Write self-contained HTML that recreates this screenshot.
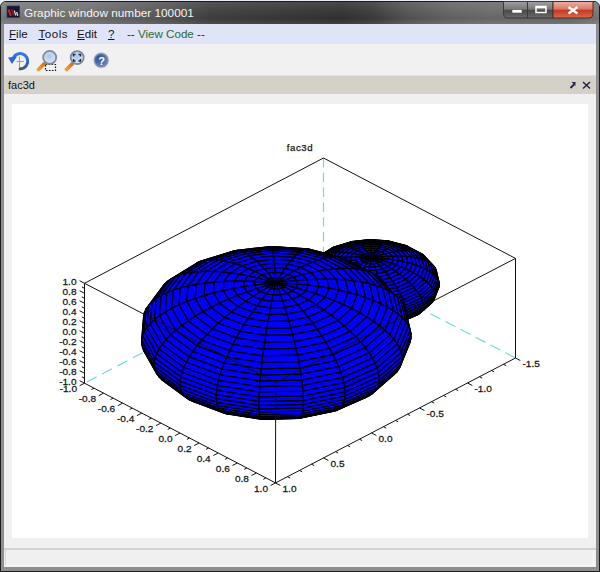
<!DOCTYPE html>
<html><head><meta charset="utf-8">
<style>
*{margin:0;padding:0;box-sizing:border-box}
html,body{width:600px;height:572px;overflow:hidden;background:#e9ecf6;font-family:"Liberation Sans",sans-serif}
.abs{position:absolute}
#frame{position:absolute;left:0;top:1px;width:600px;height:571px;background:#8e8e8e;border:1px solid #1a1a1a;border-radius:6px 6px 0 0}
#title{position:absolute;left:1px;top:2px;width:598px;height:22px;border-radius:5px 5px 0 0;
 background:linear-gradient(to right,#7c7c7c 0%,#707070 15%,#555 28%,#404040 35%,#373737 50%,#333 57%,#3c3c3c 62%,#555 68%,#656565 75%,#6c6c6c 82%,#6a6a6a 95%,#7a7a7a 100%)}
#titlesh{position:absolute;left:1px;top:2px;width:598px;height:22px;border-radius:5px 5px 0 0;
 background:linear-gradient(to bottom,rgba(255,255,255,0.10) 0%,rgba(255,255,255,0.03) 40%,rgba(0,0,0,0.06) 75%,rgba(255,255,255,0.06) 100%)}
#ttext{position:absolute;left:24px;top:5.5px;font-size:11.8px;color:#f4f4f4;white-space:nowrap}
#menubar{position:absolute;left:4px;top:24px;width:592px;height:21px;background:#dfe4f6;border-bottom:1px solid #aeb2bc;box-shadow:0 1px 0 #d6d8dc}
.mi{position:absolute;top:3px;font-size:11.6px;color:#151515;white-space:nowrap}
#toolbar{position:absolute;left:4px;top:44px;width:592px;height:31px;background:#f1f1f1}
#hdr{position:absolute;left:4px;top:75px;width:592px;height:19px;background:#d5d1c9;border-top:1px solid #e2ded8}
#content{position:absolute;left:4px;top:94px;width:592px;height:455px;background:#f0f0f0}
#canvas{position:absolute;left:12px;top:104px;width:576px;height:434px;background:#fff}
#status{position:absolute;left:4px;top:548px;width:592px;height:19px;background:#f0f0f0;border-top:2px solid #d2d2d2}
#statin{position:absolute;left:5px;top:550px;width:589px;height:16px;border-left:1px solid #d8d8d8;border-right:1px solid #fafafa;border-bottom:1px solid #fafafa}
</style></head><body>
<div id="frame"></div>
<div id="title"></div>
<div id="titlesh"></div>
<div id="ttext">Graphic window number 100001</div>
<div id="menubar">
 <span class="mi" style="left:5px"><u>F</u>ile</span>
 <span class="mi" style="left:34.5px;letter-spacing:0.5px"><u>T</u>ools</span>
 <span class="mi" style="left:73px"><u>E</u>dit</span>
 <span class="mi" style="left:104px"><u>?</u></span>
 <span class="mi" style="left:123px;color:#2a2a2a">-- <span style="color:#2c6a3c">View Code</span> --</span>
</div>
<div id="toolbar"></div>
<div id="hdr"><span class="abs" style="left:4px;top:2.5px;font-size:11px;color:#111">fac3d</span></div>
<div id="content"></div>
<div id="canvas"></div>
<div id="status"></div>
<div id="statin"></div>
<svg class="abs" style="left:0;top:0" width="600" height="572" viewBox="0 0 600 572">
<defs>
 <linearGradient id="gbtn" x1="0" y1="0" x2="0" y2="1">
  <stop offset="0" stop-color="#a0a0a0"/><stop offset="0.45" stop-color="#7a7a7a"/><stop offset="0.55" stop-color="#4a4a4a"/><stop offset="1" stop-color="#6a6a6a"/>
 </linearGradient>
 <linearGradient id="gred" x1="0" y1="0" x2="0" y2="1">
  <stop offset="0" stop-color="#eeb0a0"/><stop offset="0.45" stop-color="#dc7a68"/><stop offset="0.55" stop-color="#c43a22"/><stop offset="1" stop-color="#d86a50"/>
 </linearGradient>
 <linearGradient id="gblue" x1="0" y1="0" x2="0" y2="1">
  <stop offset="0" stop-color="#3a78e0"/><stop offset="0.6" stop-color="#2a62c8"/><stop offset="1" stop-color="#3a6070"/>
 </linearGradient>
 <radialGradient id="glens" cx="0.45" cy="0.4" r="0.6">
  <stop offset="0" stop-color="#a8c8ee"/><stop offset="1" stop-color="#dce8f6"/>
 </radialGradient>
 <linearGradient id="ghandle" x1="0" y1="1" x2="1" y2="0">
  <stop offset="0" stop-color="#f0a030"/><stop offset="1" stop-color="#e07010"/>
 </linearGradient>
 <radialGradient id="ghelp" cx="0.35" cy="0.35" r="0.7">
  <stop offset="0" stop-color="#2a4f90"/><stop offset="1" stop-color="#6a8cc0"/>
 </radialGradient>
</defs>
<!-- window icon -->
<rect x="7" y="6" width="12.5" height="11.5" fill="#15152e" stroke="#2e3a66" stroke-width="0.8"/>
<path d="M8.6 9.5 L10.8 15.8" stroke="#d02020" stroke-width="2.2"/>
<path d="M11.6 9 L13.6 15.5" stroke="#802018" stroke-width="1.6"/>
<path d="M14.2 10.5 L15.8 15.5" stroke="#e8c8c8" stroke-width="1.3"/>
<path d="M16.6 12 L17.8 15.8" stroke="#f0e0e0" stroke-width="1.3"/>
<!-- title buttons -->
<path d="M503.5 1.5 H527.5 V18 H507.5 Q503.5 18 503.5 14 Z" fill="url(#gbtn)" stroke="#3a3a3a" stroke-width="1"/>
<rect x="527.5" y="1.5" width="25.5" height="16.5" fill="url(#gbtn)" stroke="#3a3a3a" stroke-width="1"/>
<path d="M553 1.5 H593 V14 Q593 18 589 18 H553 Z" fill="url(#gred)" stroke="#5a2a22" stroke-width="1"/>
<rect x="512" y="9.5" width="10" height="3.5" fill="#fff" stroke="#505050" stroke-width="0.6"/>
<rect x="536" y="6.5" width="10" height="6" fill="none" stroke="#fff" stroke-width="1.5"/>
<rect x="536" y="6.5" width="10" height="1.8" fill="#fff"/>
<path d="M568.5 7 L577.5 13.5 M577.5 7 L568.5 13.5" stroke="#fff" stroke-width="2.4"/>
<!-- toolbar icons -->
<path d="M18.8 68.7 A7.6 7.6 0 1 0 13.5 57.5" fill="none" stroke="url(#gblue)" stroke-width="3"/>
<path d="M8 57.5 L17 56.5 L12 64 Z" fill="#2a66d8"/>
<path d="M19.5 56.5 V67 M16.5 61.5 H24" stroke="#8aa6a8" stroke-width="1"/>
<rect x="45.5" y="64.5" width="10" height="6" fill="none" stroke="#111" stroke-width="1.2" stroke-dasharray="1.6 1.4"/>
<path d="M38.5 69.5 L44 64" stroke="url(#ghandle)" stroke-width="3.8" stroke-linecap="round"/>
<circle cx="49.7" cy="57.4" r="6.5" fill="url(#glens)" stroke="#7d8a98" stroke-width="1.8"/>
<path d="M66.5 69.5 L72 64" stroke="url(#ghandle)" stroke-width="3.8" stroke-linecap="round"/>
<circle cx="77.2" cy="57.6" r="6.5" fill="url(#glens)" stroke="#7d8a98" stroke-width="1.8"/>
<path d="M73.5 56.5 V54.5 H75.5 M78.5 54.5 H80.5 V56.5 M80.5 59 V61 H78.5 M75.5 61 H73.5 V59" fill="none" stroke="#1a2a4a" stroke-width="1.4"/>
<circle cx="101.2" cy="60.3" r="7" fill="url(#ghelp)" stroke="#8a98aa" stroke-width="1.4"/>
<circle cx="101.2" cy="60.3" r="7.9" fill="none" stroke="#d8e0ea" stroke-width="0.6"/>
<text x="101.5" y="64.5" font-family="Liberation Sans, sans-serif" font-weight="bold" font-size="11" fill="#fff" text-anchor="middle">?</text>
<!-- header icons -->
<path d="M570.5 88 L574 84.5" stroke="#2a2044" stroke-width="1.8"/>
<path d="M571.5 82 H575.5 V86 Z" fill="#2a2044"/>
<path d="M583 82 L590 88.5 M590 82 L583 88.5" stroke="#2a2044" stroke-width="1.5"/>
<g stroke="#66dedb" stroke-width="1.15" fill="none"><line x1="323.50" y1="158.00" x2="323.50" y2="258.00" stroke-dasharray="9.5 5.3"/><line x1="84.50" y1="383.20" x2="323.50" y2="258.00" stroke-dasharray="11.05 6.32" stroke-dashoffset="-2.6"/><line x1="515.50" y1="358.00" x2="323.50" y2="258.00" stroke-dasharray="11.28 5.64"/></g><g fill="#0000ff" stroke="#000" stroke-width="1.2" stroke-linejoin="round"><polygon points="390.3,257.4 390.7,254.8 369.0,253.4 369.1,256.0"/><polygon points="389.8,260.1 390.3,257.4 369.1,256.0 369.2,258.8"/><polygon points="390.7,254.8 390.9,252.3 369.0,250.9 369.0,253.4"/><polygon points="389.2,263.1 389.8,260.1 369.2,258.8 369.2,261.8"/><polygon points="369.1,256.0 369.0,253.4 347.7,255.7 348.1,258.3"/><polygon points="369.2,258.8 369.1,256.0 348.1,258.3 348.8,261.0"/><polygon points="390.9,252.3 391.1,250.1 369.0,248.7 369.0,250.9"/><polygon points="369.0,253.4 369.0,250.9 347.3,253.3 347.7,255.7"/><polygon points="369.2,261.8 369.2,258.8 348.8,261.0 349.5,263.9"/><polygon points="388.5,266.1 389.2,263.1 369.2,261.8 369.3,264.9"/><polygon points="369.0,250.9 369.0,248.7 347.2,251.1 347.3,253.3"/><polygon points="391.1,250.1 391.1,248.1 369.0,246.7 369.0,248.7"/><polygon points="369.3,264.9 369.2,261.8 349.5,263.9 350.5,267.0"/><polygon points="387.6,269.3 388.5,266.1 369.3,264.9 369.5,268.1"/><polygon points="369.0,248.7 369.0,246.7 347.2,249.1 347.2,251.1"/><polygon points="369.5,268.1 369.3,264.9 350.5,267.0 351.5,270.1"/><polygon points="391.1,248.1 390.9,246.3 369.0,244.9 369.0,246.7"/><polygon points="386.7,272.5 387.6,269.3 369.5,268.1 369.6,271.4"/><polygon points="369.0,246.7 369.0,244.9 347.3,247.3 347.2,249.1"/><polygon points="369.6,271.4 369.5,268.1 351.5,270.1 352.7,273.3"/><polygon points="408.5,264.9 409.5,262.3 390.3,257.4 389.8,260.1"/><polygon points="390.9,246.3 390.7,244.8 369.0,243.4 369.0,244.9"/><polygon points="409.5,262.3 410.3,259.8 390.7,254.8 390.3,257.4"/><polygon points="407.3,267.7 408.5,264.9 389.8,260.1 389.2,263.1"/><polygon points="410.3,259.8 410.8,257.4 390.9,252.3 390.7,254.8"/><polygon points="369.0,244.9 369.0,243.4 347.7,245.7 347.3,247.3"/><polygon points="385.7,275.8 386.7,272.5 369.6,271.4 369.7,274.8"/><polygon points="405.8,270.5 407.3,267.7 389.2,263.1 388.5,266.1"/><polygon points="410.8,257.4 411.0,255.2 391.1,250.1 390.9,252.3"/><polygon points="369.7,274.8 369.6,271.4 352.7,273.3 354.0,276.5"/><polygon points="404.1,273.5 405.8,270.5 388.5,266.1 387.6,269.3"/><polygon points="348.8,261.0 348.1,258.3 329.7,264.0 330.9,266.6"/><polygon points="390.7,244.8 390.3,243.5 369.1,242.1 369.0,243.4"/><polygon points="411.0,255.2 411.0,253.2 391.1,248.1 391.1,250.1"/><polygon points="348.1,258.3 347.7,255.7 328.9,261.6 329.7,264.0"/><polygon points="349.5,263.9 348.8,261.0 330.9,266.6 332.2,269.3"/><polygon points="347.7,255.7 347.3,253.3 328.3,259.2 328.9,261.6"/><polygon points="369.0,243.4 369.1,242.1 348.1,244.4 347.7,245.7"/><polygon points="350.5,267.0 349.5,263.9 332.2,269.3 333.9,272.1"/><polygon points="384.5,279.2 385.7,275.8 369.7,274.8 369.9,278.3"/><polygon points="402.2,276.5 404.1,273.5 387.6,269.3 386.7,272.5"/><polygon points="347.3,253.3 347.2,251.1 328.1,257.0 328.3,259.2"/><polygon points="411.0,253.2 410.8,251.4 390.9,246.3 391.1,248.1"/><polygon points="369.9,278.3 369.7,274.8 354.0,276.5 355.4,279.9"/><polygon points="351.5,270.1 350.5,267.0 333.9,272.1 335.8,275.0"/><polygon points="347.2,251.1 347.2,249.1 328.1,255.0 328.1,257.0"/><polygon points="390.3,243.5 389.8,242.4 369.2,241.1 369.1,242.1"/><polygon points="400.1,279.5 402.2,276.5 386.7,272.5 385.7,275.8"/><polygon points="352.7,273.3 351.5,270.1 335.8,275.0 337.9,277.9"/><polygon points="410.8,251.4 410.3,249.8 390.7,244.8 390.9,246.3"/><polygon points="369.1,242.1 369.2,241.1 348.8,243.3 348.1,244.4"/><polygon points="383.3,282.6 384.5,279.2 369.9,278.3 370.1,281.7"/><polygon points="347.2,249.1 347.3,247.3 328.3,253.2 328.1,255.0"/><polygon points="370.1,281.7 369.9,278.3 355.4,279.9 357.0,283.2"/><polygon points="354.0,276.5 352.7,273.3 337.9,277.9 340.2,280.9"/><polygon points="397.8,282.6 400.1,279.5 385.7,275.8 384.5,279.2"/><polygon points="410.3,249.8 409.5,248.4 390.3,243.5 390.7,244.8"/><polygon points="389.8,242.4 389.2,241.6 369.2,240.3 369.2,241.1"/><polygon points="347.3,247.3 347.7,245.7 328.9,251.6 328.3,253.2"/><polygon points="369.2,241.1 369.2,240.3 349.5,242.5 348.8,243.3"/><polygon points="355.4,279.9 354.0,276.5 340.2,280.9 342.7,283.8"/><polygon points="382.1,286.0 383.3,282.6 370.1,281.7 370.2,285.2"/><polygon points="370.2,285.2 370.1,281.7 357.0,283.2 358.6,286.5"/><polygon points="395.4,285.7 397.8,282.6 384.5,279.2 383.3,282.6"/><polygon points="347.7,245.7 348.1,244.4 329.7,250.1 328.9,251.6"/><polygon points="409.5,248.4 408.5,247.2 389.8,242.4 390.3,243.5"/><polygon points="423.2,272.6 424.6,270.2 409.5,262.3 408.5,264.9"/><polygon points="421.5,275.1 423.2,272.6 408.5,264.9 407.3,267.7"/><polygon points="389.2,241.6 388.5,241.1 369.3,239.9 369.2,240.3"/><polygon points="357.0,283.2 355.4,279.9 342.7,283.8 345.5,286.8"/><polygon points="424.6,270.2 425.7,267.8 410.3,259.8 409.5,262.3"/><polygon points="419.4,277.7 421.5,275.1 407.3,267.7 405.8,270.5"/><polygon points="369.2,240.3 369.3,239.9 350.5,242.0 349.5,242.5"/><polygon points="425.7,267.8 426.4,265.6 410.8,257.4 410.3,259.8"/><polygon points="417.1,280.3 419.4,277.7 405.8,270.5 404.1,273.5"/><polygon points="392.7,288.7 395.4,285.7 383.3,282.6 382.1,286.0"/><polygon points="348.1,244.4 348.8,243.3 330.9,248.9 329.7,250.1"/><polygon points="380.7,289.4 382.1,286.0 370.2,285.2 370.4,288.7"/><polygon points="426.4,265.6 426.8,263.4 411.0,255.2 410.8,257.4"/><polygon points="414.4,282.9 417.1,280.3 404.1,273.5 402.2,276.5"/><polygon points="370.4,288.7 370.2,285.2 358.6,286.5 360.3,289.8"/><polygon points="408.5,247.2 407.3,246.2 389.2,241.6 389.8,242.4"/><polygon points="358.6,286.5 357.0,283.2 345.5,286.8 348.4,289.7"/><polygon points="426.8,263.4 426.8,261.4 411.0,253.2 411.0,255.2"/><polygon points="411.4,285.5 414.4,282.9 402.2,276.5 400.1,279.5"/><polygon points="332.2,269.3 330.9,266.6 317.4,275.0 319.2,277.4"/><polygon points="330.9,266.6 329.7,264.0 315.9,272.6 317.4,275.0"/><polygon points="333.9,272.1 332.2,269.3 319.2,277.4 321.4,279.8"/><polygon points="388.5,241.1 387.6,240.9 369.5,239.7 369.3,239.9"/><polygon points="329.7,264.0 328.9,261.6 314.8,270.3 315.9,272.6"/><polygon points="335.8,275.0 333.9,272.1 321.4,279.8 323.9,282.3"/><polygon points="348.8,243.3 349.5,242.5 332.2,247.9 330.9,248.9"/><polygon points="369.3,239.9 369.5,239.7 351.5,241.7 350.5,242.0"/><polygon points="426.8,261.4 426.4,259.5 410.8,251.4 411.0,253.2"/><polygon points="408.2,288.1 411.4,285.5 400.1,279.5 397.8,282.6"/><polygon points="390.0,291.7 392.7,288.7 382.1,286.0 380.7,289.4"/><polygon points="328.9,261.6 328.3,259.2 314.0,268.1 314.8,270.3"/><polygon points="337.9,277.9 335.8,275.0 323.9,282.3 326.7,284.8"/><polygon points="407.3,246.2 405.8,245.5 388.5,241.1 389.2,241.6"/><polygon points="379.3,292.7 380.7,289.4 370.4,288.7 370.6,292.1"/><polygon points="328.3,259.2 328.1,257.0 313.7,265.9 314.0,268.1"/><polygon points="370.6,292.1 370.4,288.7 360.3,289.8 362.1,293.1"/><polygon points="360.3,289.8 358.6,286.5 348.4,289.7 351.4,292.6"/><polygon points="340.2,280.9 337.9,277.9 326.7,284.8 329.8,287.3"/><polygon points="426.4,259.5 425.7,257.8 410.3,249.8 410.8,251.4"/><polygon points="404.8,290.6 408.2,288.1 397.8,282.6 395.4,285.7"/><polygon points="328.1,257.0 328.1,255.0 313.7,263.9 313.7,265.9"/><polygon points="342.7,283.8 340.2,280.9 329.8,287.3 333.2,289.7"/><polygon points="349.5,242.5 350.5,242.0 333.9,247.1 332.2,247.9"/><polygon points="387.6,240.9 386.7,240.9 369.6,239.8 369.5,239.7"/><polygon points="387.1,294.7 390.0,291.7 380.7,289.4 379.3,292.7"/><polygon points="328.1,255.0 328.3,253.2 314.0,262.0 313.7,263.9"/><polygon points="425.7,257.8 424.6,256.3 409.5,248.4 410.3,249.8"/><polygon points="401.2,293.1 404.8,290.6 395.4,285.7 392.7,288.7"/><polygon points="369.5,239.7 369.6,239.8 352.7,241.7 351.5,241.7"/><polygon points="313.1,281.8 313.9,276.6 270.6,273.8 270.7,279.1"/><polygon points="312.1,287.4 313.1,281.8 270.7,279.1 270.8,284.7"/><polygon points="345.5,286.8 342.7,283.8 333.2,289.7 336.8,292.1"/><polygon points="405.8,245.5 404.1,245.1 387.6,240.9 388.5,241.1"/><polygon points="362.1,293.1 360.3,289.8 351.4,292.6 354.6,295.4"/><polygon points="313.9,276.6 314.4,271.8 270.5,268.9 270.6,273.8"/><polygon points="377.8,296.0 379.3,292.7 370.6,292.1 370.8,295.5"/><polygon points="310.9,293.2 312.1,287.4 270.8,284.7 271.0,290.6"/><polygon points="370.8,295.5 370.6,292.1 362.1,293.1 363.9,296.3"/><polygon points="328.3,253.2 328.9,251.6 314.8,260.3 314.0,262.0"/><polygon points="270.7,279.1 270.6,273.8 227.8,278.5 228.8,283.7"/><polygon points="270.8,284.7 270.7,279.1 228.8,283.7 230.0,289.2"/><polygon points="348.4,289.7 345.5,286.8 336.8,292.1 340.6,294.5"/><polygon points="314.4,271.8 314.6,267.3 270.5,264.5 270.5,268.9"/><polygon points="424.6,256.3 423.2,254.9 408.5,247.2 409.5,248.4"/><polygon points="397.3,295.6 401.2,293.1 392.7,288.7 390.0,291.7"/><polygon points="270.6,273.8 270.5,268.9 227.2,273.7 227.8,278.5"/><polygon points="350.5,242.0 351.5,241.7 335.8,246.6 333.9,247.1"/><polygon points="271.0,290.6 270.8,284.7 230.0,289.2 231.6,295.0"/><polygon points="309.5,299.3 310.9,293.2 271.0,290.6 271.2,296.9"/><polygon points="384.2,297.6 387.1,294.7 379.3,292.7 377.8,296.0"/><polygon points="386.7,240.9 385.7,241.2 369.7,240.2 369.6,239.8"/><polygon points="328.9,251.6 329.7,250.1 315.9,258.7 314.8,260.3"/><polygon points="270.5,268.9 270.5,264.5 226.9,269.3 227.2,273.7"/><polygon points="404.1,245.1 402.2,244.9 386.7,240.9 387.6,240.9"/><polygon points="351.4,292.6 348.4,289.7 340.6,294.5 344.7,296.7"/><polygon points="363.9,296.3 362.1,293.1 354.6,295.4 357.9,298.2"/><polygon points="369.6,239.8 369.7,240.2 354.0,241.9 352.7,241.7"/><polygon points="314.6,267.3 314.6,263.3 270.5,260.4 270.5,264.5"/><polygon points="271.2,296.9 271.0,290.6 231.6,295.0 233.4,301.0"/><polygon points="423.2,254.9 421.5,253.7 407.3,246.2 408.5,247.2"/><polygon points="393.3,297.9 397.3,295.6 390.0,291.7 387.1,294.7"/><polygon points="376.3,299.2 377.8,296.0 370.8,295.5 371.0,298.8"/><polygon points="371.0,298.8 370.8,295.5 363.9,296.3 365.8,299.4"/><polygon points="307.8,305.7 309.5,299.3 271.2,296.9 271.4,303.3"/><polygon points="329.7,250.1 330.9,248.9 317.4,257.2 315.9,258.7"/><polygon points="351.5,241.7 352.7,241.7 337.9,246.3 335.8,246.6"/><polygon points="270.5,264.5 270.5,260.4 226.9,265.2 226.9,269.3"/><polygon points="354.6,295.4 351.4,292.6 344.7,296.7 348.9,298.9"/><polygon points="425.1,288.9 427.9,286.7 419.4,277.7 417.1,280.3"/><polygon points="427.9,286.7 430.3,284.6 421.5,275.1 419.4,277.7"/><polygon points="422.0,291.0 425.1,288.9 417.1,280.3 414.4,282.9"/><polygon points="430.3,284.6 432.4,282.4 423.2,272.6 421.5,275.1"/><polygon points="381.1,300.4 384.2,297.6 377.8,296.0 376.3,299.2"/><polygon points="418.5,293.0 422.0,291.0 414.4,282.9 411.4,285.5"/><polygon points="271.4,303.3 271.2,296.9 233.4,301.0 235.5,307.3"/><polygon points="421.5,253.7 419.4,252.7 405.8,245.5 407.3,246.2"/><polygon points="432.4,282.4 434.0,280.2 424.6,270.2 423.2,272.6"/><polygon points="389.2,300.2 393.3,297.9 387.1,294.7 384.2,297.6"/><polygon points="314.6,263.3 314.4,259.7 270.5,256.9 270.5,260.4"/><polygon points="414.7,295.0 418.5,293.0 411.4,285.5 408.2,288.1"/><polygon points="365.8,299.4 363.9,296.3 357.9,298.2 361.2,300.8"/><polygon points="402.2,244.9 400.1,244.9 385.7,241.2 386.7,240.9"/><polygon points="385.7,241.2 384.5,241.8 369.9,240.8 369.7,240.2"/><polygon points="434.0,280.2 435.3,278.1 425.7,267.8 424.6,270.2"/><polygon points="330.9,248.9 332.2,247.9 319.2,255.9 317.4,257.2"/><polygon points="410.7,296.9 414.7,295.0 408.2,288.1 404.8,290.6"/><polygon points="369.7,240.2 369.9,240.8 355.4,242.4 354.0,241.9"/><polygon points="357.9,298.2 354.6,295.4 348.9,298.9 353.3,301.0"/><polygon points="435.3,278.1 436.1,276.0 426.4,265.6 425.7,267.8"/><polygon points="305.9,312.2 307.8,305.7 271.4,303.3 271.7,309.9"/><polygon points="270.5,260.4 270.5,256.9 227.2,261.6 226.9,265.2"/><polygon points="406.4,298.7 410.7,296.9 404.8,290.6 401.2,293.1"/><polygon points="352.7,241.7 354.0,241.9 340.2,246.2 337.9,246.3"/><polygon points="374.8,302.2 376.3,299.2 371.0,298.8 371.3,302.0"/><polygon points="436.1,276.0 436.5,273.9 426.8,263.4 426.4,265.6"/><polygon points="371.3,302.0 371.0,298.8 365.8,299.4 367.8,302.4"/><polygon points="419.4,252.7 417.1,251.9 404.1,245.1 405.8,245.5"/><polygon points="384.9,302.3 389.2,300.2 384.2,297.6 381.1,300.4"/><polygon points="271.7,309.9 271.4,303.3 235.5,307.3 237.9,313.7"/><polygon points="401.8,300.4 406.4,298.7 401.2,293.1 397.3,295.6"/><polygon points="326.7,284.8 323.9,282.3 317.2,291.3 320.4,293.2"/><polygon points="323.9,282.3 321.4,279.8 314.4,289.2 317.2,291.3"/><polygon points="329.8,287.3 326.7,284.8 320.4,293.2 323.9,295.1"/><polygon points="332.2,247.9 333.9,247.1 321.4,254.8 319.2,255.9"/><polygon points="321.4,279.8 319.2,277.4 311.9,287.2 314.4,289.2"/><polygon points="333.2,289.7 329.8,287.3 323.9,295.1 327.8,296.9"/><polygon points="378.0,303.1 381.1,300.4 376.3,299.2 374.8,302.2"/><polygon points="319.2,277.4 317.4,275.0 309.8,285.1 311.9,287.2"/><polygon points="436.5,273.9 436.5,271.9 426.8,261.4 426.8,263.4"/><polygon points="349.5,296.9 351.5,291.6 313.1,281.8 312.1,287.4"/><polygon points="314.4,259.7 313.9,256.6 270.6,253.8 270.5,256.9"/><polygon points="351.5,291.6 353.1,286.6 313.9,276.6 313.1,281.8"/><polygon points="336.8,292.1 333.2,289.7 327.8,296.9 331.9,298.6"/><polygon points="361.2,300.8 357.9,298.2 353.3,301.0 357.8,302.9"/><polygon points="367.8,302.4 365.8,299.4 361.2,300.8 364.7,303.3"/><polygon points="397.1,302.0 401.8,300.4 397.3,295.6 393.3,297.9"/><polygon points="317.4,275.0 315.9,272.6 308.1,283.0 309.8,285.1"/><polygon points="400.1,244.9 397.8,245.2 384.5,241.8 385.7,241.2"/><polygon points="347.1,302.5 349.5,296.9 312.1,287.4 310.9,293.2"/><polygon points="340.6,294.5 336.8,292.1 331.9,298.6 336.3,300.3"/><polygon points="353.1,286.6 354.1,281.9 314.4,271.8 313.9,276.6"/><polygon points="384.5,241.8 383.3,242.6 370.1,241.8 369.9,240.8"/><polygon points="315.9,272.6 314.8,270.3 306.8,280.9 308.1,283.0"/><polygon points="436.5,271.9 436.1,269.9 426.4,259.5 426.8,261.4"/><polygon points="344.7,296.7 340.6,294.5 336.3,300.3 340.9,301.8"/><polygon points="369.9,240.8 370.1,241.8 357.0,243.2 355.4,242.4"/><polygon points="270.5,256.9 270.6,253.8 227.8,258.5 227.2,261.6"/><polygon points="392.2,303.5 397.1,302.0 393.3,297.9 389.2,300.2"/><polygon points="303.8,318.8 305.9,312.2 271.7,309.9 272.0,316.7"/><polygon points="344.1,308.2 347.1,302.5 310.9,293.2 309.5,299.3"/><polygon points="417.1,251.9 414.4,251.2 402.2,244.9 404.1,245.1"/><polygon points="380.5,304.4 384.9,302.3 381.1,300.4 378.0,303.1"/><polygon points="333.9,247.1 335.8,246.6 323.9,253.9 321.4,254.8"/><polygon points="314.8,270.3 314.0,268.1 306.0,278.8 306.8,280.9"/><polygon points="354.0,241.9 355.4,242.4 342.7,246.4 340.2,246.2"/><polygon points="354.1,281.9 354.6,277.5 314.6,267.3 314.4,271.8"/><polygon points="348.9,298.9 344.7,296.7 340.9,301.8 345.7,303.2"/><polygon points="364.7,303.3 361.2,300.8 357.8,302.9 362.4,304.8"/><polygon points="436.1,269.9 435.3,268.1 425.7,257.8 426.4,259.5"/><polygon points="272.0,316.7 271.7,309.9 237.9,313.7 240.5,320.2"/><polygon points="373.3,305.2 374.8,302.2 371.3,302.0 371.5,305.1"/><polygon points="371.5,305.1 371.3,302.0 367.8,302.4 369.7,305.3"/><polygon points="314.0,268.1 313.7,265.9 305.5,276.8 306.0,278.8"/><polygon points="387.2,304.8 392.2,303.5 389.2,300.2 384.9,302.3"/><polygon points="353.3,301.0 348.9,298.9 345.7,303.2 350.7,304.4"/><polygon points="374.9,305.6 378.0,303.1 374.8,302.2 373.3,305.2"/><polygon points="340.7,314.1 344.1,308.2 309.5,299.3 307.8,305.7"/><polygon points="369.7,305.3 367.8,302.4 364.7,303.3 368.2,305.7"/><polygon points="230.0,289.2 228.8,283.7 192.0,295.2 194.2,300.4"/><polygon points="313.9,256.6 313.1,254.0 270.7,251.3 270.6,253.8"/><polygon points="313.7,265.9 313.7,263.9 305.5,274.8 305.5,276.8"/><polygon points="435.3,268.1 434.0,266.3 424.6,256.3 425.7,257.8"/><polygon points="354.6,277.5 354.6,273.5 314.6,263.3 314.6,267.3"/><polygon points="228.8,283.7 227.8,278.5 190.3,290.2 192.0,295.2"/><polygon points="397.8,245.2 395.4,245.7 383.3,242.6 384.5,241.8"/><polygon points="357.8,302.9 353.3,301.0 350.7,304.4 355.9,305.5"/><polygon points="231.6,295.0 230.0,289.2 194.2,300.4 197.0,305.8"/><polygon points="335.8,246.6 337.9,246.3 326.7,253.2 323.9,253.9"/><polygon points="414.4,251.2 411.4,250.8 400.1,244.9 402.2,244.9"/><polygon points="376.1,306.3 380.5,304.4 378.0,303.1 374.9,305.6"/><polygon points="382.1,306.1 387.2,304.8 384.9,302.3 380.5,304.4"/><polygon points="227.8,278.5 227.2,273.7 189.2,285.6 190.3,290.2"/><polygon points="368.2,305.7 364.7,303.3 362.4,304.8 367.0,306.5"/><polygon points="383.3,242.6 382.1,243.7 370.2,243.0 370.1,241.8"/><polygon points="313.7,263.9 314.0,262.0 306.0,272.8 305.5,274.8"/><polygon points="270.6,253.8 270.7,251.3 228.8,255.9 227.8,258.5"/><polygon points="355.4,242.4 357.0,243.2 345.5,246.8 342.7,246.4"/><polygon points="233.4,301.0 231.6,295.0 197.0,305.8 200.2,311.4"/><polygon points="362.4,304.8 357.8,302.9 355.9,305.5 361.1,306.5"/><polygon points="370.1,241.8 370.2,243.0 358.6,244.3 357.0,243.2"/><polygon points="434.0,266.3 432.4,264.7 423.2,254.9 424.6,256.3"/><polygon points="301.6,325.5 303.8,318.8 272.0,316.7 272.3,323.6"/><polygon points="336.9,320.1 340.7,314.1 307.8,305.7 305.9,312.2"/><polygon points="227.2,273.7 226.9,269.3 188.6,281.2 189.2,285.6"/><polygon points="376.9,307.1 382.1,306.1 380.5,304.4 376.1,306.3"/><polygon points="314.0,262.0 314.8,260.3 306.8,270.9 306.0,272.8"/><polygon points="354.6,273.5 354.1,269.8 314.4,259.7 314.6,263.3"/><polygon points="367.0,306.5 362.4,304.8 361.1,306.5 366.4,307.3"/><polygon points="371.7,308.0 373.3,305.2 371.5,305.1 371.7,308.0"/><polygon points="272.3,323.6 272.0,316.7 240.5,320.2 243.4,326.8"/><polygon points="371.7,308.0 371.5,305.1 369.7,305.3 371.7,308.0"/><polygon points="337.9,246.3 340.2,246.2 329.8,252.6 326.7,253.2"/><polygon points="371.7,308.0 374.9,305.6 373.3,305.2 371.7,308.0"/><polygon points="235.5,307.3 233.4,301.0 200.2,311.4 204.0,317.1"/><polygon points="371.7,308.0 369.7,305.3 368.2,305.7 371.7,308.0"/><polygon points="432.4,264.7 430.3,263.1 421.5,253.7 423.2,254.9"/><polygon points="411.4,250.8 408.2,250.6 397.8,245.2 400.1,244.9"/><polygon points="371.7,308.0 376.1,306.3 374.9,305.6 371.7,308.0"/><polygon points="398.2,306.6 403.1,305.8 401.8,300.4 397.1,302.0"/><polygon points="393.1,307.2 398.2,306.6 397.1,302.0 392.2,303.5"/><polygon points="403.1,305.8 407.8,304.9 406.4,298.7 401.8,300.4"/><polygon points="371.7,308.0 368.2,305.7 367.0,306.5 371.7,308.0"/><polygon points="387.9,307.6 393.1,307.2 392.2,303.5 387.2,304.8"/><polygon points="407.8,304.9 412.3,303.8 410.7,296.9 406.4,298.7"/><polygon points="395.4,245.7 392.7,246.5 382.1,243.7 383.3,242.6"/><polygon points="314.8,260.3 315.9,258.7 308.1,269.1 306.8,270.9"/><polygon points="382.5,307.9 387.9,307.6 387.2,304.8 382.1,306.1"/><polygon points="412.3,303.8 416.5,302.7 414.7,295.0 410.7,296.9"/><polygon points="371.7,308.0 376.9,307.1 376.1,306.3 371.7,308.0"/><polygon points="226.9,269.3 226.9,265.2 188.6,277.2 188.6,281.2"/><polygon points="371.7,308.0 367.0,306.5 366.4,307.3 371.7,308.0"/><polygon points="377.1,308.0 382.5,307.9 382.1,306.1 376.9,307.1"/><polygon points="416.5,302.7 420.5,301.3 418.5,293.0 414.7,295.0"/><polygon points="313.1,254.0 312.1,251.9 270.8,249.2 270.7,251.3"/><polygon points="371.7,308.0 377.1,308.0 376.9,307.1 371.7,308.0"/><polygon points="366.4,307.3 361.1,306.5 360.9,308.4 366.3,308.3"/><polygon points="361.1,306.5 355.9,305.5 355.6,308.3 360.9,308.4"/><polygon points="420.5,301.3 424.1,299.9 422.0,291.0 418.5,293.0"/><polygon points="371.7,308.0 366.4,307.3 366.3,308.3 371.7,308.0"/><polygon points="355.9,305.5 350.7,304.4 350.4,308.1 355.6,308.3"/><polygon points="357.0,243.2 358.6,244.3 348.4,247.4 345.5,246.8"/><polygon points="332.7,326.2 336.9,320.1 305.9,312.2 303.8,318.8"/><polygon points="350.7,304.4 345.7,303.2 345.4,307.7 350.4,308.1"/><polygon points="430.3,263.1 427.9,261.7 419.4,252.7 421.5,253.7"/><polygon points="382.1,243.7 380.7,245.1 370.4,244.4 370.2,243.0"/><polygon points="237.9,313.7 235.5,307.3 204.0,317.1 208.2,322.9"/><polygon points="424.1,299.9 427.3,298.4 425.1,288.9 422.0,291.0"/><polygon points="345.7,303.2 340.9,301.8 340.5,307.2 345.4,307.7"/><polygon points="315.9,258.7 317.4,257.2 309.8,267.4 308.1,269.1"/><polygon points="371.7,308.0 376.8,309.0 377.1,308.0 371.7,308.0"/><polygon points="370.2,243.0 370.4,244.4 360.3,245.5 358.6,244.3"/><polygon points="371.7,308.0 366.3,308.3 366.8,309.2 371.7,308.0"/><polygon points="340.2,246.2 342.7,246.4 333.2,252.3 329.8,252.6"/><polygon points="340.9,301.8 336.3,300.3 335.8,306.5 340.5,307.2"/><polygon points="354.1,269.8 353.1,266.6 313.9,256.6 314.4,259.7"/><polygon points="270.7,251.3 270.8,249.2 230.0,253.7 228.8,255.9"/><polygon points="427.3,298.4 430.3,296.7 427.9,286.7 425.1,288.9"/><polygon points="371.7,308.0 375.9,309.8 376.8,309.0 371.7,308.0"/><polygon points="371.7,308.0 366.8,309.2 367.8,309.9 371.7,308.0"/><polygon points="336.3,300.3 331.9,298.6 331.4,305.6 335.8,306.5"/><polygon points="376.8,309.0 381.8,309.7 382.5,307.9 377.1,308.0"/><polygon points="408.2,250.6 404.8,250.6 395.4,245.7 397.8,245.2"/><polygon points="371.7,308.0 374.5,310.4 375.9,309.8 371.7,308.0"/><polygon points="299.2,332.3 301.6,325.5 272.3,323.6 272.6,330.6"/><polygon points="371.7,308.0 367.8,309.9 369.3,310.5 371.7,308.0"/><polygon points="226.9,265.2 227.2,261.6 189.2,273.5 188.6,277.2"/><polygon points="430.3,296.7 432.8,295.0 430.3,284.6 427.9,286.7"/><polygon points="331.9,298.6 327.8,296.9 327.2,304.6 331.4,305.6"/><polygon points="366.3,308.3 360.9,308.4 361.9,310.2 366.8,309.2"/><polygon points="371.7,308.0 372.8,310.7 374.5,310.4 371.7,308.0"/><polygon points="317.4,257.2 319.2,255.9 311.9,265.8 309.8,267.4"/><polygon points="371.7,308.0 369.3,310.5 371.0,310.7 371.7,308.0"/><polygon points="427.9,261.7 425.1,260.5 417.1,251.9 419.4,252.7"/><polygon points="371.7,308.0 371.0,310.7 372.8,310.7 371.7,308.0"/><polygon points="327.8,296.9 323.9,295.1 323.3,303.5 327.2,304.6"/><polygon points="381.8,309.7 386.8,310.3 387.9,307.6 382.5,307.9"/><polygon points="432.8,295.0 434.9,293.2 432.4,282.4 430.3,284.6"/><polygon points="272.6,330.6 272.3,323.6 243.4,326.8 246.4,333.5"/><polygon points="392.7,246.5 390.0,247.5 380.7,245.1 382.1,243.7"/><polygon points="323.9,295.1 320.4,293.2 319.7,302.2 323.3,303.5"/><polygon points="240.5,320.2 237.9,313.7 208.2,322.9 212.9,328.8"/><polygon points="360.9,308.4 355.6,308.3 357.1,311.0 361.9,310.2"/><polygon points="375.9,309.8 380.0,311.3 381.8,309.7 376.8,309.0"/><polygon points="434.9,293.2 436.6,291.3 434.0,280.2 432.4,282.4"/><polygon points="342.7,246.4 345.5,246.8 336.8,252.1 333.2,252.3"/><polygon points="386.8,310.3 391.7,310.8 393.1,307.2 387.9,307.6"/><polygon points="358.6,244.3 360.3,245.5 351.4,248.3 348.4,247.4"/><polygon points="319.2,255.9 321.4,254.8 314.4,264.2 311.9,265.8"/><polygon points="328.1,332.3 332.7,326.2 303.8,318.8 301.6,325.5"/><polygon points="366.8,309.2 361.9,310.2 364.0,311.7 367.8,309.9"/><polygon points="320.4,293.2 317.2,291.3 316.4,300.8 319.7,302.2"/><polygon points="425.1,260.5 422.0,259.3 414.4,251.2 417.1,251.9"/><polygon points="436.6,291.3 437.9,289.4 435.3,278.1 434.0,280.2"/><polygon points="380.7,245.1 379.3,246.7 370.6,246.1 370.4,244.4"/><polygon points="353.1,266.6 351.5,263.8 313.1,254.0 313.9,256.6"/><polygon points="404.8,250.6 401.2,250.9 392.7,246.5 395.4,245.7"/><polygon points="312.1,251.9 310.9,250.4 271.0,247.8 270.8,249.2"/><polygon points="317.2,291.3 314.4,289.2 313.5,299.3 316.4,300.8"/><polygon points="355.6,308.3 350.4,308.1 352.4,311.6 357.1,311.0"/><polygon points="391.7,310.8 396.4,311.0 398.2,306.6 393.1,307.2"/><polygon points="370.4,244.4 370.6,246.1 362.1,247.1 360.3,245.5"/><polygon points="227.2,261.6 227.8,258.5 190.3,270.2 189.2,273.5"/><polygon points="374.5,310.4 377.2,312.6 380.0,311.3 375.9,309.8"/><polygon points="367.8,309.9 364.0,311.7 366.9,312.8 369.3,310.5"/><polygon points="437.9,289.4 438.8,287.4 436.1,276.0 435.3,278.1"/><polygon points="321.4,254.8 323.9,253.9 317.2,262.8 314.4,264.2"/><polygon points="314.4,289.2 311.9,287.2 311.0,297.7 313.5,299.3"/><polygon points="380.0,311.3 384.0,312.7 386.8,310.3 381.8,309.7"/><polygon points="270.8,249.2 271.0,247.8 231.6,252.1 230.0,253.7"/><polygon points="396.4,311.0 401.0,311.1 403.1,305.8 398.2,306.6"/><polygon points="372.8,310.7 373.9,313.2 377.2,312.6 374.5,310.4"/><polygon points="422.0,259.3 418.5,258.4 411.4,250.8 414.4,251.2"/><polygon points="369.3,310.5 366.9,312.8 370.3,313.3 371.0,310.7"/><polygon points="350.4,308.1 345.4,307.7 347.9,312.1 352.4,311.6"/><polygon points="345.5,246.8 348.4,247.4 340.6,252.2 336.8,252.1"/><polygon points="361.9,310.2 357.1,311.0 360.2,313.3 364.0,311.7"/><polygon points="371.0,310.7 370.3,313.3 373.9,313.2 372.8,310.7"/><polygon points="438.8,287.4 439.3,285.4 436.5,273.9 436.1,276.0"/><polygon points="311.9,287.2 309.8,285.1 308.9,296.0 311.0,297.7"/><polygon points="390.0,247.5 387.1,248.7 379.3,246.7 380.7,245.1"/><polygon points="243.4,326.8 240.5,320.2 212.9,328.8 218.0,334.7"/><polygon points="296.6,339.1 299.2,332.3 272.6,330.6 273.0,337.6"/><polygon points="401.0,311.1 405.4,311.0 407.8,304.9 403.1,305.8"/><polygon points="323.9,253.9 326.7,253.2 320.4,261.6 317.2,262.8"/><polygon points="360.3,245.5 362.1,247.1 354.6,249.4 351.4,248.3"/><polygon points="309.8,285.1 308.1,283.0 307.2,294.2 308.9,296.0"/><polygon points="439.3,285.4 439.3,283.4 436.5,271.9 436.5,273.9"/><polygon points="401.2,250.9 397.3,251.3 390.0,247.5 392.7,246.5"/><polygon points="345.4,307.7 340.5,307.2 343.4,312.4 347.9,312.1"/><polygon points="273.0,337.6 272.6,330.6 246.4,333.5 249.7,340.1"/><polygon points="323.2,338.4 328.1,332.3 301.6,325.5 299.2,332.3"/><polygon points="384.0,312.7 388.0,313.9 391.7,310.8 386.8,310.3"/><polygon points="418.5,258.4 414.7,257.6 408.2,250.6 411.4,250.8"/><polygon points="377.2,312.6 380.0,314.5 384.0,312.7 380.0,311.3"/><polygon points="227.8,258.5 228.8,255.9 192.0,267.4 190.3,270.2"/><polygon points="308.1,283.0 306.8,280.9 305.9,292.3 307.2,294.2"/><polygon points="405.4,311.0 409.6,310.7 412.3,303.8 407.8,304.9"/><polygon points="439.3,283.4 438.8,281.4 436.1,269.9 436.5,271.9"/><polygon points="379.3,246.7 377.8,248.5 370.8,248.1 370.6,246.1"/><polygon points="364.0,311.7 360.2,313.3 364.6,314.9 366.9,312.8"/><polygon points="351.5,263.8 349.5,261.5 312.1,251.9 313.1,254.0"/><polygon points="370.6,246.1 370.8,248.1 363.9,248.9 362.1,247.1"/><polygon points="357.1,311.0 352.4,311.6 356.5,314.6 360.2,313.3"/><polygon points="326.7,253.2 329.8,252.6 323.9,260.5 320.4,261.6"/><polygon points="348.4,247.4 351.4,248.3 344.7,252.5 340.6,252.2"/><polygon points="340.5,307.2 335.8,306.5 339.2,312.5 343.4,312.4"/><polygon points="306.8,280.9 306.0,278.8 305.0,290.4 305.9,292.3"/><polygon points="438.8,281.4 437.9,279.4 435.3,268.1 436.1,269.9"/><polygon points="409.6,310.7 413.5,310.2 416.5,302.7 412.3,303.8"/><polygon points="373.9,313.2 375.0,315.6 380.0,314.5 377.2,312.6"/><polygon points="379.0,312.3 381.8,307.5 351.5,291.6 349.5,296.9"/><polygon points="375.5,317.3 379.0,312.3 349.5,296.9 347.1,302.5"/><polygon points="310.9,250.4 309.5,249.3 271.2,246.9 271.0,247.8"/><polygon points="366.9,312.8 364.6,314.9 369.7,315.7 370.3,313.3"/><polygon points="414.7,257.6 410.7,256.9 404.8,250.6 408.2,250.6"/><polygon points="388.0,313.9 391.9,315.0 396.4,311.0 391.7,310.8"/><polygon points="387.1,248.7 384.2,250.2 377.8,248.5 379.3,246.7"/><polygon points="246.4,333.5 243.4,326.8 218.0,334.7 223.4,340.7"/><polygon points="381.8,307.5 383.9,302.7 353.1,286.6 351.5,291.6"/><polygon points="371.4,322.4 375.5,317.3 347.1,302.5 344.1,308.2"/><polygon points="370.3,313.3 369.7,315.7 375.0,315.6 373.9,313.2"/><polygon points="306.0,278.8 305.5,276.8 304.6,288.4 305.0,290.4"/><polygon points="397.3,251.3 393.3,251.9 387.1,248.7 390.0,247.5"/><polygon points="335.8,306.5 331.4,305.6 335.2,312.3 339.2,312.5"/><polygon points="329.8,252.6 333.2,252.3 327.8,259.5 323.9,260.5"/><polygon points="437.9,279.4 436.6,277.4 434.0,266.3 435.3,268.1"/><polygon points="362.1,247.1 363.9,248.9 357.9,250.7 354.6,249.4"/><polygon points="413.5,310.2 417.1,309.6 420.5,301.3 416.5,302.7"/><polygon points="271.0,247.8 271.2,246.9 233.4,251.0 231.6,252.1"/><polygon points="383.9,302.7 385.3,298.2 354.1,281.9 353.1,286.6"/><polygon points="366.6,327.6 371.4,322.4 344.1,308.2 340.7,314.1"/><polygon points="380.0,314.5 382.6,316.3 388.0,313.9 384.0,312.7"/><polygon points="352.4,311.6 347.9,312.1 352.9,315.8 356.5,314.6"/><polygon points="305.5,276.8 305.5,274.8 304.6,286.4 304.6,288.4"/><polygon points="351.4,248.3 354.6,249.4 348.9,252.9 344.7,252.5"/><polygon points="436.6,277.4 434.9,275.5 432.4,264.7 434.0,266.3"/><polygon points="360.2,313.3 356.5,314.6 362.3,316.8 364.6,314.9"/><polygon points="410.7,256.9 406.4,256.5 401.2,250.9 404.8,250.6"/><polygon points="331.4,305.6 327.2,304.6 331.4,312.0 335.2,312.3"/><polygon points="318.0,344.5 323.2,338.4 299.2,332.3 296.6,339.1"/><polygon points="228.8,255.9 230.0,253.7 194.2,264.9 192.0,267.4"/><polygon points="417.1,309.6 420.5,308.8 424.1,299.9 420.5,301.3"/><polygon points="391.9,315.0 395.7,315.8 401.0,311.1 396.4,311.0"/><polygon points="333.2,252.3 336.8,252.1 331.9,258.7 327.8,259.5"/><polygon points="293.9,345.8 296.6,339.1 273.0,337.6 273.4,344.5"/><polygon points="305.5,274.8 306.0,272.8 305.0,284.4 304.6,286.4"/><polygon points="377.8,248.5 376.3,250.6 371.0,250.3 370.8,248.1"/><polygon points="385.3,298.2 386.0,294.0 354.6,277.5 354.1,281.9"/><polygon points="361.3,332.8 366.6,327.6 340.7,314.1 336.9,320.1"/><polygon points="370.8,248.1 371.0,250.3 365.8,250.8 363.9,248.9"/><polygon points="434.9,275.5 432.8,273.6 430.3,263.1 432.4,264.7"/><polygon points="273.4,344.5 273.0,337.6 249.7,340.1 253.1,346.7"/><polygon points="349.5,261.5 347.1,259.6 310.9,250.4 312.1,251.9"/><polygon points="393.3,251.9 389.2,252.8 384.2,250.2 387.1,248.7"/><polygon points="375.0,315.6 376.1,317.7 382.6,316.3 380.0,314.5"/><polygon points="306.0,272.8 306.8,270.9 305.9,282.3 305.0,284.4"/><polygon points="420.5,308.8 423.6,307.8 427.3,298.4 424.1,299.9"/><polygon points="327.2,304.6 323.3,303.5 327.8,311.6 331.4,312.0"/><polygon points="347.9,312.1 343.4,312.4 349.4,316.8 352.9,315.8"/><polygon points="384.2,250.2 381.1,251.8 376.3,250.6 377.8,248.5"/><polygon points="364.6,314.9 362.3,316.8 369.0,317.8 369.7,315.7"/><polygon points="406.4,256.5 401.8,256.2 397.3,251.3 401.2,250.9"/><polygon points="336.8,252.1 340.6,252.2 336.3,258.0 331.9,258.7"/><polygon points="432.8,273.6 430.3,271.7 427.9,261.7 430.3,263.1"/><polygon points="249.7,340.1 246.4,333.5 223.4,340.7 229.2,346.5"/><polygon points="363.9,248.9 365.8,250.8 361.2,252.3 357.9,250.7"/><polygon points="382.6,316.3 385.3,317.9 391.9,315.0 388.0,313.9"/><polygon points="369.7,315.7 369.0,317.8 376.1,317.7 375.0,315.6"/><polygon points="386.0,294.0 386.0,289.9 354.6,273.5 354.6,277.5"/><polygon points="355.4,338.0 361.3,332.8 336.9,320.1 332.7,326.2"/><polygon points="354.6,249.4 357.9,250.7 353.3,253.6 348.9,252.9"/><polygon points="395.7,315.8 399.3,316.3 405.4,311.0 401.0,311.1"/><polygon points="306.8,270.9 308.1,269.1 307.2,280.3 305.9,282.3"/><polygon points="423.6,307.8 426.3,306.6 430.3,296.7 427.3,298.4"/><polygon points="197.0,305.8 194.2,300.4 167.3,317.0 170.9,321.9"/><polygon points="323.3,303.5 319.7,302.2 324.6,310.9 327.8,311.6"/><polygon points="356.5,314.6 352.9,315.8 360.0,318.5 362.3,316.8"/><polygon points="430.3,271.7 427.3,270.0 425.1,260.5 427.9,261.7"/><polygon points="194.2,300.4 192.0,295.2 164.3,312.3 167.3,317.0"/><polygon points="200.2,311.4 197.0,305.8 170.9,321.9 175.3,326.8"/><polygon points="309.5,249.3 307.8,248.8 271.4,246.5 271.2,246.9"/><polygon points="308.1,269.1 309.8,267.4 308.9,278.3 307.2,280.3"/><polygon points="340.6,252.2 344.7,252.5 340.9,257.5 336.3,258.0"/><polygon points="192.0,295.2 190.3,290.2 162.1,307.7 164.3,312.3"/><polygon points="401.8,256.2 397.1,256.0 393.3,251.9 397.3,251.3"/><polygon points="204.0,317.1 200.2,311.4 175.3,326.8 180.3,331.7"/><polygon points="426.3,306.6 428.6,305.3 432.8,295.0 430.3,296.7"/><polygon points="343.4,312.4 339.2,312.5 346.1,317.5 349.4,316.8"/><polygon points="389.2,252.8 384.9,253.8 381.1,251.8 384.2,250.2"/><polygon points="427.3,270.0 424.1,268.3 422.0,259.3 425.1,260.5"/><polygon points="376.3,250.6 374.8,252.9 371.3,252.7 371.0,250.3"/><polygon points="230.0,253.7 231.6,252.1 197.0,262.9 194.2,264.9"/><polygon points="371.0,250.3 371.3,252.7 367.8,253.0 365.8,250.8"/><polygon points="319.7,302.2 316.4,300.8 321.6,310.0 324.6,310.9"/><polygon points="309.8,267.4 311.9,265.8 311.0,276.3 308.9,278.3"/><polygon points="271.2,246.9 271.4,246.5 235.5,250.5 233.4,251.0"/><polygon points="386.0,289.9 385.3,286.2 354.1,269.8 354.6,273.5"/><polygon points="349.0,343.2 355.4,338.0 332.7,326.2 328.1,332.3"/><polygon points="399.3,316.3 402.7,316.7 409.6,310.7 405.4,311.0"/><polygon points="312.5,350.6 318.0,344.5 296.6,339.1 293.9,345.8"/><polygon points="190.3,290.2 189.2,285.6 160.6,303.2 162.1,307.7"/><polygon points="357.9,250.7 361.2,252.3 357.8,254.4 353.3,253.6"/><polygon points="208.2,322.9 204.0,317.1 180.3,331.7 185.9,336.7"/><polygon points="376.1,317.7 377.1,319.6 385.3,317.9 382.6,316.3"/><polygon points="381.1,251.8 378.0,253.7 374.8,252.9 376.3,250.6"/><polygon points="428.6,305.3 430.6,303.9 434.9,293.2 432.8,295.0"/><polygon points="385.3,317.9 387.8,319.3 395.7,315.8 391.9,315.0"/><polygon points="424.1,268.3 420.5,266.7 418.5,258.4 422.0,259.3"/><polygon points="344.7,252.5 348.9,252.9 345.7,257.2 340.9,257.5"/><polygon points="311.9,265.8 314.4,264.2 313.5,274.3 311.0,276.3"/><polygon points="362.3,316.8 360.0,318.5 368.4,319.8 369.0,317.8"/><polygon points="365.8,250.8 367.8,253.0 364.7,254.0 361.2,252.3"/><polygon points="347.1,259.6 344.1,258.2 309.5,249.3 310.9,250.4"/><polygon points="397.1,256.0 392.2,256.1 389.2,252.8 393.3,251.9"/><polygon points="316.4,300.8 313.5,299.3 319.0,309.0 321.6,310.0"/><polygon points="291.1,352.5 293.9,345.8 273.4,344.5 273.8,351.4"/><polygon points="189.2,285.6 188.6,281.2 159.8,299.0 160.6,303.2"/><polygon points="369.0,317.8 368.4,319.8 377.1,319.6 376.1,317.7"/><polygon points="352.9,315.8 349.4,316.8 357.9,319.9 360.0,318.5"/><polygon points="420.5,266.7 416.5,265.2 414.7,257.6 418.5,258.4"/><polygon points="314.4,264.2 317.2,262.8 316.4,272.4 313.5,274.3"/><polygon points="339.2,312.5 335.2,312.3 342.9,318.0 346.1,317.5"/><polygon points="430.6,303.9 432.2,302.3 436.6,291.3 434.9,293.2"/><polygon points="273.8,351.4 273.4,344.5 253.1,346.7 256.7,353.3"/><polygon points="253.1,346.7 249.7,340.1 229.2,346.5 235.3,352.3"/><polygon points="212.9,328.8 208.2,322.9 185.9,336.7 192.1,341.6"/><polygon points="402.7,316.7 405.9,316.9 413.5,310.2 409.6,310.7"/><polygon points="384.9,253.8 380.5,255.0 378.0,253.7 381.1,251.8"/><polygon points="348.9,252.9 353.3,253.6 350.7,257.0 345.7,257.2"/><polygon points="385.3,286.2 383.9,282.7 353.1,266.6 354.1,269.8"/><polygon points="342.1,348.3 349.0,343.2 328.1,332.3 323.2,338.4"/><polygon points="317.2,262.8 320.4,261.6 319.7,270.6 316.4,272.4"/><polygon points="313.5,299.3 311.0,297.7 316.7,307.8 319.0,309.0"/><polygon points="416.5,265.2 412.3,263.9 410.7,256.9 414.7,257.6"/><polygon points="361.2,252.3 364.7,254.0 362.4,255.4 357.8,254.4"/><polygon points="432.2,302.3 433.4,300.6 437.9,289.4 436.6,291.3"/><polygon points="392.2,256.1 387.2,256.3 384.9,253.8 389.2,252.8"/><polygon points="188.6,281.2 188.6,277.2 159.8,294.9 159.8,299.0"/><polygon points="374.8,252.9 373.3,255.4 371.5,255.2 371.3,252.7"/><polygon points="320.4,261.6 323.9,260.5 323.3,268.9 319.7,270.6"/><polygon points="371.3,252.7 371.5,255.2 369.7,255.4 367.8,253.0"/><polygon points="387.8,319.3 390.2,320.4 399.3,316.3 395.7,315.8"/><polygon points="412.3,263.9 407.8,262.6 406.4,256.5 410.7,256.9"/><polygon points="218.0,334.7 212.9,328.8 192.1,341.6 198.9,346.5"/><polygon points="353.3,253.6 357.8,254.4 355.9,257.0 350.7,257.0"/><polygon points="377.1,319.6 378.1,321.2 387.8,319.3 385.3,317.9"/><polygon points="311.0,297.7 308.9,296.0 314.8,306.4 316.7,307.8"/><polygon points="378.0,253.7 374.9,255.8 373.3,255.4 374.8,252.9"/><polygon points="433.4,300.6 434.3,298.8 438.8,287.4 437.9,289.4"/><polygon points="335.2,312.3 331.4,312.0 339.9,318.3 342.9,318.0"/><polygon points="405.9,316.9 408.9,316.8 417.1,309.6 413.5,310.2"/><polygon points="367.8,253.0 369.7,255.4 368.2,255.9 364.7,254.0"/><polygon points="231.6,252.1 233.4,251.0 200.2,261.4 197.0,262.9"/><polygon points="323.9,260.5 327.8,259.5 327.2,267.2 323.3,268.9"/><polygon points="360.0,318.5 357.9,319.9 367.8,321.5 368.4,319.8"/><polygon points="407.8,262.6 403.1,261.5 401.8,256.2 406.4,256.5"/><polygon points="307.8,248.8 305.9,248.9 271.7,246.7 271.4,246.5"/><polygon points="349.4,316.8 346.1,317.5 355.8,321.1 357.9,319.9"/><polygon points="387.2,256.3 382.1,256.7 380.5,255.0 384.9,253.8"/><polygon points="306.8,356.5 312.5,350.6 293.9,345.8 291.1,352.5"/><polygon points="380.5,255.0 376.1,256.4 374.9,255.8 378.0,253.7"/><polygon points="327.8,259.5 331.9,258.7 331.4,265.7 327.2,267.2"/><polygon points="434.3,298.8 434.7,296.8 439.3,285.4 438.8,287.4"/><polygon points="308.9,296.0 307.2,294.2 313.3,304.9 314.8,306.4"/><polygon points="368.4,319.8 367.8,321.5 378.1,321.2 377.1,319.6"/><polygon points="364.7,254.0 368.2,255.9 367.0,256.6 362.4,255.4"/><polygon points="403.1,261.5 398.2,260.6 397.1,256.0 401.8,256.2"/><polygon points="188.6,277.2 189.2,273.5 160.6,291.2 159.8,294.9"/><polygon points="357.8,254.4 362.4,255.4 361.1,257.2 355.9,257.0"/><polygon points="383.9,282.7 381.8,279.6 351.5,263.8 353.1,266.6"/><polygon points="334.8,353.3 342.1,348.3 323.2,338.4 318.0,344.5"/><polygon points="271.4,246.5 271.7,246.7 237.9,250.4 235.5,250.5"/><polygon points="331.9,258.7 336.3,258.0 335.8,264.2 331.4,265.7"/><polygon points="223.4,340.7 218.0,334.7 198.9,346.5 206.1,351.3"/><polygon points="344.1,258.2 340.7,257.3 307.8,248.8 309.5,249.3"/><polygon points="434.7,296.8 434.7,294.8 439.3,283.4 439.3,285.4"/><polygon points="408.9,316.8 411.7,316.5 420.5,308.8 417.1,309.6"/><polygon points="398.2,260.6 393.1,259.7 392.2,256.1 397.1,256.0"/><polygon points="331.4,312.0 327.8,311.6 337.2,318.4 339.9,318.3"/><polygon points="336.3,258.0 340.9,257.5 340.5,262.9 335.8,264.2"/><polygon points="390.2,320.4 392.5,321.2 402.7,316.7 399.3,316.3"/><polygon points="307.2,294.2 305.9,292.3 312.1,303.3 313.3,304.9"/><polygon points="382.1,256.7 376.9,257.3 376.1,256.4 380.5,255.0"/><polygon points="256.7,353.3 253.1,346.7 235.3,352.3 241.7,357.9"/><polygon points="362.4,255.4 367.0,256.6 366.4,257.5 361.1,257.2"/><polygon points="393.1,259.7 387.9,259.1 387.2,256.3 392.2,256.1"/><polygon points="340.9,257.5 345.7,257.2 345.4,261.7 340.5,262.9"/><polygon points="434.7,294.8 434.3,292.7 438.8,281.4 439.3,283.4"/><polygon points="373.3,255.4 371.7,258.0 371.7,258.0 371.5,255.2"/><polygon points="371.5,255.2 371.7,258.0 371.7,258.0 369.7,255.4"/><polygon points="288.2,359.0 291.1,352.5 273.8,351.4 274.2,358.1"/><polygon points="374.9,255.8 371.7,258.0 371.7,258.0 373.3,255.4"/><polygon points="369.7,255.4 371.7,258.0 371.7,258.0 368.2,255.9"/><polygon points="378.1,321.2 379.1,322.6 390.2,320.4 387.8,319.3"/><polygon points="345.7,257.2 350.7,257.0 350.4,260.7 345.4,261.7"/><polygon points="387.9,259.1 382.5,258.6 382.1,256.7 387.2,256.3"/><polygon points="305.9,292.3 305.0,290.4 311.3,301.5 312.1,303.3"/><polygon points="376.1,256.4 371.7,258.0 371.7,258.0 374.9,255.8"/><polygon points="274.2,358.1 273.8,351.4 256.7,353.3 260.4,359.7"/><polygon points="346.1,317.5 342.9,318.0 353.8,322.1 355.8,321.1"/><polygon points="368.2,255.9 371.7,258.0 371.7,258.0 367.0,256.6"/><polygon points="189.2,273.5 190.3,270.2 162.1,287.7 160.6,291.2"/><polygon points="434.3,292.7 433.4,290.6 437.9,279.4 438.8,281.4"/><polygon points="350.7,257.0 355.9,257.0 355.6,259.8 350.4,260.7"/><polygon points="357.9,319.9 355.8,321.1 367.2,322.9 367.8,321.5"/><polygon points="411.7,316.5 414.2,316.0 423.6,307.8 420.5,308.8"/><polygon points="376.9,257.3 371.7,258.0 371.7,258.0 376.1,256.4"/><polygon points="382.5,258.6 377.1,258.2 376.9,257.3 382.1,256.7"/><polygon points="367.0,256.6 371.7,258.0 371.7,258.0 366.4,257.5"/><polygon points="355.9,257.0 361.1,257.2 360.9,259.0 355.6,259.8"/><polygon points="327.8,311.6 324.6,310.9 334.6,318.2 337.2,318.4"/><polygon points="229.2,346.5 223.4,340.7 206.1,351.3 213.8,356.0"/><polygon points="361.1,257.2 366.4,257.5 366.3,258.4 360.9,259.0"/><polygon points="305.0,290.4 304.6,288.4 310.9,299.6 311.3,301.5"/><polygon points="377.1,258.2 371.7,258.0 371.7,258.0 376.9,257.3"/><polygon points="381.8,279.6 379.0,276.9 349.5,261.5 351.5,263.8"/><polygon points="433.4,290.6 432.2,288.4 436.6,277.4 437.9,279.4"/><polygon points="327.1,358.2 334.8,353.3 318.0,344.5 312.5,350.6"/><polygon points="366.4,257.5 371.7,258.0 371.7,258.0 366.3,258.4"/><polygon points="367.8,321.5 367.2,322.9 379.1,322.6 378.1,321.2"/><polygon points="233.4,251.0 235.5,250.5 204.0,260.3 200.2,261.4"/><polygon points="392.5,321.2 394.6,321.9 405.9,316.9 402.7,316.7"/><polygon points="376.8,259.1 371.7,258.0 371.7,258.0 377.1,258.2"/><polygon points="366.3,258.4 371.7,258.0 371.7,258.0 366.8,259.3"/><polygon points="432.2,288.4 430.6,286.1 434.9,275.5 436.6,277.4"/><polygon points="304.6,288.4 304.6,286.4 310.9,297.6 310.9,299.6"/><polygon points="375.9,259.9 371.7,258.0 371.7,258.0 376.8,259.1"/><polygon points="414.2,316.0 416.4,315.3 426.3,306.6 423.6,307.8"/><polygon points="381.8,260.4 376.8,259.1 377.1,258.2 382.5,258.6"/><polygon points="366.8,259.3 371.7,258.0 371.7,258.0 367.8,260.1"/><polygon points="430.6,286.1 428.6,283.9 432.8,273.6 434.9,275.5"/><polygon points="300.8,362.3 306.8,356.5 291.1,352.5 288.2,359.0"/><polygon points="374.5,260.5 371.7,258.0 371.7,258.0 375.9,259.9"/><polygon points="360.9,259.0 366.3,258.4 366.8,259.3 361.9,260.8"/><polygon points="367.8,260.1 371.7,258.0 371.7,258.0 369.3,260.6"/><polygon points="324.6,310.9 321.6,310.0 332.3,317.8 334.6,318.2"/><polygon points="386.8,261.8 381.8,260.4 382.5,258.6 387.9,259.1"/><polygon points="305.9,248.9 303.8,249.5 272.0,247.5 271.7,246.7"/><polygon points="372.8,260.9 371.7,258.0 371.7,258.0 374.5,260.5"/><polygon points="304.6,286.4 305.0,284.4 311.3,295.4 310.9,297.6"/><polygon points="428.6,283.9 426.3,281.6 430.3,271.7 432.8,273.6"/><polygon points="369.3,260.6 371.7,258.0 371.7,258.0 371.0,260.9"/><polygon points="342.9,318.0 339.9,318.3 351.9,322.8 353.8,322.1"/><polygon points="371.0,260.9 371.7,258.0 371.7,258.0 372.8,260.9"/><polygon points="190.3,270.2 192.0,267.4 164.3,284.4 162.1,287.7"/><polygon points="379.1,322.6 380.0,323.8 392.5,321.2 390.2,320.4"/><polygon points="391.7,263.4 386.8,261.8 387.9,259.1 393.1,259.7"/><polygon points="426.3,281.6 423.6,279.4 427.3,270.0 430.3,271.7"/><polygon points="355.6,259.8 360.9,259.0 361.9,260.8 357.1,262.5"/><polygon points="340.7,257.3 336.9,256.8 305.9,248.9 307.8,248.8"/><polygon points="396.4,265.0 391.7,263.4 393.1,259.7 398.2,260.6"/><polygon points="355.8,321.1 353.8,322.1 366.6,324.1 367.2,322.9"/><polygon points="235.3,352.3 229.2,346.5 213.8,356.0 221.9,360.6"/><polygon points="260.4,359.7 256.7,353.3 241.7,357.9 248.2,363.4"/><polygon points="305.0,284.4 305.9,282.3 312.1,293.3 311.3,295.4"/><polygon points="423.6,279.4 420.5,277.1 424.1,268.3 427.3,270.0"/><polygon points="271.7,246.7 272.0,247.5 240.5,250.9 237.9,250.4"/><polygon points="380.0,262.0 375.9,259.9 376.8,259.1 381.8,260.4"/><polygon points="416.4,315.3 418.3,314.4 428.6,305.3 426.3,306.6"/><polygon points="401.0,266.8 396.4,265.0 398.2,260.6 403.1,261.5"/><polygon points="420.5,277.1 417.1,274.9 420.5,266.7 424.1,268.3"/><polygon points="405.4,268.7 401.0,266.8 403.1,261.5 407.8,262.6"/><polygon points="394.6,321.9 396.6,322.2 408.9,316.8 405.9,316.9"/><polygon points="417.1,274.9 413.5,272.8 416.5,265.2 420.5,266.7"/><polygon points="361.9,260.8 366.8,259.3 367.8,260.1 364.0,262.3"/><polygon points="350.4,260.7 355.6,259.8 357.1,262.5 352.4,264.2"/><polygon points="409.6,270.7 405.4,268.7 407.8,262.6 412.3,263.9"/><polygon points="413.5,272.8 409.6,270.7 412.3,263.9 416.5,265.2"/><polygon points="305.9,282.3 307.2,280.3 313.3,291.0 312.1,293.3"/><polygon points="379.0,276.9 375.5,274.5 347.1,259.6 349.5,261.5"/><polygon points="319.1,363.0 327.1,358.2 312.5,350.6 306.8,356.5"/><polygon points="367.2,322.9 366.6,324.1 380.0,323.8 379.1,322.6"/><polygon points="321.6,310.0 319.0,309.0 330.2,317.2 332.3,317.8"/><polygon points="345.4,261.7 350.4,260.7 352.4,264.2 347.9,266.1"/><polygon points="307.2,280.3 308.9,278.3 314.8,288.7 313.3,291.0"/><polygon points="377.2,263.2 374.5,260.5 375.9,259.9 380.0,262.0"/><polygon points="364.0,262.3 367.8,260.1 369.3,260.6 366.9,263.4"/><polygon points="340.5,262.9 345.4,261.7 347.9,266.1 343.4,268.1"/><polygon points="384.0,264.2 380.0,262.0 381.8,260.4 386.8,261.8"/><polygon points="418.3,314.4 419.9,313.2 430.6,303.9 428.6,305.3"/><polygon points="308.9,278.3 311.0,276.3 316.7,286.4 314.8,288.7"/><polygon points="285.2,365.4 288.2,359.0 274.2,358.1 274.6,364.7"/><polygon points="339.9,318.3 337.2,318.4 350.2,323.3 351.9,322.8"/><polygon points="335.8,264.2 340.5,262.9 343.4,268.1 339.2,270.2"/><polygon points="274.6,364.7 274.2,358.1 260.4,359.7 264.2,365.9"/><polygon points="311.0,276.3 313.5,274.3 319.0,284.0 316.7,286.4"/><polygon points="373.9,263.9 372.8,260.9 374.5,260.5 377.2,263.2"/><polygon points="192.0,267.4 194.2,264.9 167.3,281.5 164.3,284.4"/><polygon points="357.1,262.5 361.9,260.8 364.0,262.3 360.2,264.7"/><polygon points="380.0,323.8 380.9,324.7 394.6,321.9 392.5,321.2"/><polygon points="366.9,263.4 369.3,260.6 371.0,260.9 370.3,264.0"/><polygon points="331.4,265.7 335.8,264.2 339.2,270.2 335.2,272.4"/><polygon points="235.5,250.5 237.9,250.4 208.2,259.7 204.0,260.3"/><polygon points="313.5,274.3 316.4,272.4 321.6,281.6 319.0,284.0"/><polygon points="370.3,264.0 371.0,260.9 372.8,260.9 373.9,263.9"/><polygon points="327.2,267.2 331.4,265.7 335.2,272.4 331.4,274.6"/><polygon points="316.4,272.4 319.7,270.6 324.6,279.3 321.6,281.6"/><polygon points="319.0,309.0 316.7,307.8 328.4,316.3 330.2,317.2"/><polygon points="323.3,268.9 327.2,267.2 331.4,274.6 327.8,276.9"/><polygon points="319.7,270.6 323.3,268.9 327.8,276.9 324.6,279.3"/><polygon points="396.6,322.2 398.5,322.3 411.7,316.5 408.9,316.8"/><polygon points="241.7,357.9 235.3,352.3 221.9,360.6 230.4,364.9"/><polygon points="353.8,322.1 351.9,322.8 366.1,325.0 366.6,324.1"/><polygon points="388.0,266.5 384.0,264.2 386.8,261.8 391.7,263.4"/><polygon points="419.9,313.2 421.3,311.9 432.2,302.3 430.6,303.9"/><polygon points="382.7,344.8 388.3,340.6 371.4,322.4 366.6,327.6"/><polygon points="388.3,340.6 393.1,336.2 375.5,317.3 371.4,322.4"/><polygon points="376.4,349.0 382.7,344.8 366.6,327.6 361.3,332.8"/><polygon points="380.0,266.0 377.2,263.2 380.0,262.0 384.0,264.2"/><polygon points="393.1,336.2 397.2,331.9 379.0,312.3 375.5,317.3"/><polygon points="352.4,264.2 357.1,262.5 360.2,264.7 356.5,267.2"/><polygon points="294.7,367.9 300.8,362.3 288.2,359.0 285.2,365.4"/><polygon points="369.5,353.1 376.4,349.0 361.3,332.8 355.4,338.0"/><polygon points="366.6,324.1 366.1,325.0 380.9,324.7 380.0,323.8"/><polygon points="360.2,264.7 364.0,262.3 366.9,263.4 364.6,266.3"/><polygon points="316.7,307.8 314.8,306.4 326.9,315.3 328.4,316.3"/><polygon points="337.2,318.4 334.6,318.2 348.6,323.5 350.2,323.3"/><polygon points="375.5,274.5 371.4,272.4 344.1,258.2 347.1,259.6"/><polygon points="397.2,331.9 400.5,327.5 381.8,307.5 379.0,312.3"/><polygon points="310.8,367.5 319.1,363.0 306.8,356.5 300.8,362.3"/><polygon points="391.9,269.0 388.0,266.5 391.7,263.4 396.4,265.0"/><polygon points="421.3,311.9 422.2,310.4 433.4,300.6 432.2,302.3"/><polygon points="361.9,357.1 369.5,353.1 355.4,338.0 349.0,343.2"/><polygon points="264.2,365.9 260.4,359.7 248.2,363.4 255.0,368.7"/><polygon points="336.9,256.8 332.7,256.9 303.8,249.5 305.9,248.9"/><polygon points="303.8,249.5 301.6,250.7 272.3,248.8 272.0,247.5"/><polygon points="398.5,322.3 400.2,322.2 414.2,316.0 411.7,316.5"/><polygon points="375.0,267.0 373.9,263.9 377.2,263.2 380.0,266.0"/><polygon points="380.9,324.7 381.7,325.3 396.6,322.2 394.6,321.9"/><polygon points="400.5,327.5 403.0,323.2 383.9,302.7 381.8,307.5"/><polygon points="364.6,266.3 366.9,263.4 370.3,264.0 369.7,267.1"/><polygon points="194.2,264.9 197.0,262.9 170.9,279.0 167.3,281.5"/><polygon points="347.9,266.1 352.4,264.2 356.5,267.2 352.9,269.8"/><polygon points="395.7,271.5 391.9,269.0 396.4,265.0 401.0,266.8"/><polygon points="422.2,310.4 422.9,308.7 434.3,298.8 433.4,300.6"/><polygon points="369.7,267.1 370.3,264.0 373.9,263.9 375.0,267.0"/><polygon points="353.8,360.9 361.9,357.1 349.0,343.2 342.1,348.3"/><polygon points="272.0,247.5 272.3,248.8 243.4,252.0 240.5,250.9"/><polygon points="314.8,306.4 313.3,304.9 325.7,314.0 326.9,315.3"/><polygon points="382.6,268.9 380.0,266.0 384.0,264.2 388.0,266.5"/><polygon points="351.9,322.8 350.2,323.3 365.6,325.6 366.1,325.0"/><polygon points="248.2,363.4 241.7,357.9 230.4,364.9 239.1,369.1"/><polygon points="403.0,323.2 404.7,319.0 385.3,298.2 383.9,302.7"/><polygon points="356.5,267.2 360.2,264.7 364.6,266.3 362.3,269.4"/><polygon points="399.3,274.1 395.7,271.5 401.0,266.8 405.4,268.7"/><polygon points="422.9,308.7 423.3,306.8 434.7,296.8 434.3,298.8"/><polygon points="334.6,318.2 332.3,317.8 347.2,323.4 348.6,323.5"/><polygon points="343.4,268.1 347.9,266.1 352.9,269.8 349.4,272.5"/><polygon points="345.2,364.5 353.8,360.9 342.1,348.3 334.8,353.3"/><polygon points="366.1,325.0 365.6,325.6 381.7,325.3 380.9,324.7"/><polygon points="313.3,304.9 312.1,303.3 324.8,312.5 325.7,314.0"/><polygon points="400.2,322.2 401.6,321.8 416.4,315.3 414.2,316.0"/><polygon points="237.9,250.4 240.5,250.9 212.9,259.5 208.2,259.7"/><polygon points="402.7,276.7 399.3,274.1 405.4,268.7 409.6,270.7"/><polygon points="423.3,306.8 423.3,304.8 434.7,294.8 434.7,296.8"/><polygon points="282.1,371.6 285.2,365.4 274.6,364.7 275.0,371.1"/><polygon points="404.7,319.0 405.5,314.9 386.0,294.0 385.3,298.2"/><polygon points="376.1,270.3 375.0,267.0 380.0,266.0 382.6,268.9"/><polygon points="275.0,371.1 274.6,364.7 264.2,365.9 268.0,371.9"/><polygon points="381.7,325.3 382.4,325.6 398.5,322.3 396.6,322.2"/><polygon points="385.3,271.9 382.6,268.9 388.0,266.5 391.9,269.0"/><polygon points="339.2,270.2 343.4,268.1 349.4,272.5 346.1,275.3"/><polygon points="362.3,269.4 364.6,266.3 369.7,267.1 369.0,270.4"/><polygon points="371.4,272.4 366.6,270.8 340.7,257.3 344.1,258.2"/><polygon points="302.3,371.8 310.8,367.5 300.8,362.3 294.7,367.9"/><polygon points="312.1,303.3 311.3,301.5 324.1,310.9 324.8,312.5"/><polygon points="336.2,368.0 345.2,364.5 334.8,353.3 327.1,358.2"/><polygon points="405.9,279.4 402.7,276.7 409.6,270.7 413.5,272.8"/><polygon points="185.9,336.7 180.3,331.7 166.9,349.6 173.3,353.5"/><polygon points="423.3,304.8 422.9,302.7 434.3,292.7 434.7,294.8"/><polygon points="180.3,331.7 175.3,326.8 161.2,345.6 166.9,349.6"/><polygon points="192.1,341.6 185.9,336.7 173.3,353.5 180.4,357.3"/><polygon points="369.0,270.4 369.7,267.1 375.0,267.0 376.1,270.3"/><polygon points="352.9,269.8 356.5,267.2 362.3,269.4 360.0,272.5"/><polygon points="197.0,262.9 200.2,261.4 175.3,276.8 170.9,279.0"/><polygon points="350.2,323.3 348.6,323.5 365.2,326.0 365.6,325.6"/><polygon points="175.3,326.8 170.9,321.9 156.3,341.5 161.2,345.6"/><polygon points="332.3,317.8 330.2,317.2 345.9,323.0 347.2,323.4"/><polygon points="198.9,346.5 192.1,341.6 180.4,357.3 188.1,360.9"/><polygon points="408.9,282.2 405.9,279.4 413.5,272.8 417.1,274.9"/><polygon points="422.9,302.7 422.2,300.4 433.4,290.6 434.3,292.7"/><polygon points="288.5,373.2 294.7,367.9 285.2,365.4 282.1,371.6"/><polygon points="335.2,272.4 339.2,270.2 346.1,275.3 342.9,278.1"/><polygon points="401.6,321.8 402.9,321.2 418.3,314.4 416.4,315.3"/><polygon points="170.9,321.9 167.3,317.0 152.1,337.3 156.3,341.5"/><polygon points="405.5,314.9 405.5,310.8 386.0,289.9 386.0,294.0"/><polygon points="311.3,301.5 310.9,299.6 323.8,309.0 324.1,310.9"/><polygon points="206.1,351.3 198.9,346.5 188.1,360.9 196.3,364.4"/><polygon points="255.0,368.7 248.2,363.4 239.1,369.1 248.1,373.0"/><polygon points="411.7,284.9 408.9,282.2 417.1,274.9 420.5,277.1"/><polygon points="422.2,300.4 421.3,298.0 432.2,288.4 433.4,290.6"/><polygon points="268.0,371.9 264.2,365.9 255.0,368.7 261.9,373.8"/><polygon points="387.8,275.0 385.3,271.9 391.9,269.0 395.7,271.5"/><polygon points="365.6,325.6 365.2,326.0 382.4,325.6 381.7,325.3"/><polygon points="414.2,287.6 411.7,284.9 420.5,277.1 423.6,279.4"/><polygon points="421.3,298.0 419.9,295.5 430.6,286.1 432.2,288.4"/><polygon points="326.8,371.2 336.2,368.0 327.1,358.2 319.1,363.0"/><polygon points="331.4,274.6 335.2,272.4 342.9,278.1 339.9,280.9"/><polygon points="167.3,317.0 164.3,312.3 148.7,333.1 152.1,337.3"/><polygon points="416.4,290.3 414.2,287.6 423.6,279.4 426.3,281.6"/><polygon points="419.9,295.5 418.3,292.9 428.6,283.9 430.6,286.1"/><polygon points="332.7,256.9 328.1,257.4 301.6,250.7 303.8,249.5"/><polygon points="418.3,292.9 416.4,290.3 426.3,281.6 428.6,283.9"/><polygon points="213.8,356.0 206.1,351.3 196.3,364.4 205.1,367.6"/><polygon points="377.1,273.6 376.1,270.3 382.6,268.9 385.3,271.9"/><polygon points="310.9,299.6 310.9,297.6 323.8,307.0 323.8,309.0"/><polygon points="382.4,325.6 383.1,325.7 400.2,322.2 398.5,322.3"/><polygon points="360.0,272.5 362.3,269.4 369.0,270.4 368.4,273.8"/><polygon points="349.4,272.5 352.9,269.8 360.0,272.5 357.9,275.6"/><polygon points="301.6,250.7 299.2,252.4 272.6,250.6 272.3,248.8"/><polygon points="327.8,276.9 331.4,274.6 339.9,280.9 337.2,283.7"/><polygon points="330.2,317.2 328.4,316.3 344.8,322.5 345.9,323.0"/><polygon points="402.9,321.2 404.0,320.3 419.9,313.2 418.3,314.4"/><polygon points="164.3,312.3 162.1,307.7 146.1,328.9 148.7,333.1"/><polygon points="310.9,297.6 311.3,295.4 324.1,304.9 323.8,307.0"/><polygon points="405.5,310.8 404.7,307.0 385.3,286.2 386.0,289.9"/><polygon points="368.4,273.8 369.0,270.4 376.1,270.3 377.1,273.6"/><polygon points="348.6,323.5 347.2,323.4 364.8,326.1 365.2,326.0"/><polygon points="221.9,360.6 213.8,356.0 205.1,367.6 214.4,370.7"/><polygon points="272.3,248.8 272.6,250.6 246.4,253.5 243.4,252.0"/><polygon points="324.6,279.3 327.8,276.9 337.2,283.7 334.6,286.6"/><polygon points="390.2,278.1 387.8,275.0 395.7,271.5 399.3,274.1"/><polygon points="311.3,295.4 312.1,293.3 324.8,302.5 324.1,304.9"/><polygon points="317.0,374.1 326.8,371.2 319.1,363.0 310.8,367.5"/><polygon points="321.6,281.6 324.6,279.3 334.6,286.6 332.3,289.4"/><polygon points="366.6,270.8 361.3,269.6 336.9,256.8 340.7,257.3"/><polygon points="293.6,375.8 302.3,371.8 294.7,367.9 288.5,373.2"/><polygon points="312.1,293.3 313.3,291.0 325.7,300.1 324.8,302.5"/><polygon points="200.2,261.4 204.0,260.3 180.3,274.9 175.3,276.8"/><polygon points="162.1,307.7 160.6,303.2 144.4,324.8 146.1,328.9"/><polygon points="240.5,250.9 243.4,252.0 218.0,259.9 212.9,259.5"/><polygon points="319.0,284.0 321.6,281.6 332.3,289.4 330.2,292.2"/><polygon points="313.3,291.0 314.8,288.7 326.9,297.6 325.7,300.1"/><polygon points="365.2,326.0 364.8,326.1 383.1,325.7 382.4,325.6"/><polygon points="230.4,364.9 221.9,360.6 214.4,370.7 224.0,373.4"/><polygon points="404.0,320.3 404.9,319.1 421.3,311.9 419.9,313.2"/><polygon points="316.7,286.4 319.0,284.0 330.2,292.2 328.4,294.9"/><polygon points="346.1,275.3 349.4,272.5 357.9,275.6 355.8,278.9"/><polygon points="314.8,288.7 316.7,286.4 328.4,294.9 326.9,297.6"/><polygon points="378.1,277.0 377.1,273.6 385.3,271.9 387.8,275.0"/><polygon points="328.4,316.3 326.9,315.3 343.9,321.6 344.8,322.5"/><polygon points="383.1,325.7 383.7,325.5 401.6,321.8 400.2,322.2"/><polygon points="261.9,373.8 255.0,368.7 248.1,373.0 257.3,376.7"/><polygon points="357.9,275.6 360.0,272.5 368.4,273.8 367.8,277.2"/><polygon points="404.7,307.0 403.0,303.2 383.9,282.7 385.3,286.2"/><polygon points="392.5,281.3 390.2,278.1 399.3,274.1 402.7,276.7"/><polygon points="279.0,377.5 282.1,371.6 275.0,371.1 275.5,377.2"/><polygon points="275.5,377.2 275.0,371.1 268.0,371.9 272.0,377.6"/><polygon points="347.2,323.4 345.9,323.0 364.4,325.9 364.8,326.1"/><polygon points="160.6,303.2 159.8,299.0 143.6,320.7 144.4,324.8"/><polygon points="367.8,277.2 368.4,273.8 377.1,273.6 378.1,277.0"/><polygon points="307.0,376.8 317.0,374.1 310.8,367.5 302.3,371.8"/><polygon points="239.1,369.1 230.4,364.9 224.0,373.4 234.0,375.9"/><polygon points="404.9,319.1 405.6,317.8 422.2,310.4 421.3,311.9"/><polygon points="342.9,278.1 346.1,275.3 355.8,278.9 353.8,282.1"/><polygon points="282.2,378.3 288.5,373.2 282.1,371.6 279.0,377.5"/><polygon points="326.9,315.3 325.7,314.0 343.1,320.5 343.9,321.6"/><polygon points="394.6,284.4 392.5,281.3 402.7,276.7 405.9,279.4"/><polygon points="272.0,377.6 268.0,371.9 261.9,373.8 268.9,378.6"/><polygon points="379.1,280.4 378.1,277.0 387.8,275.0 390.2,278.1"/><polygon points="383.7,325.5 384.2,325.0 402.9,321.2 401.6,321.8"/><polygon points="364.8,326.1 364.4,325.9 383.7,325.5 383.1,325.7"/><polygon points="159.8,299.0 159.8,294.9 143.6,316.6 143.6,320.7"/><polygon points="405.6,317.8 406.0,316.2 422.9,308.7 422.2,310.4"/><polygon points="403.0,303.2 400.5,299.7 381.8,279.6 383.9,282.7"/><polygon points="355.8,278.9 357.9,275.6 367.8,277.2 367.2,280.6"/><polygon points="328.1,257.4 323.2,258.5 299.2,252.4 301.6,250.7"/><polygon points="248.1,373.0 239.1,369.1 234.0,375.9 244.2,378.2"/><polygon points="396.6,287.6 394.6,284.4 405.9,279.4 408.9,282.2"/><polygon points="339.9,280.9 342.9,278.1 353.8,282.1 351.9,285.4"/><polygon points="204.0,260.3 208.2,259.7 185.9,273.5 180.3,274.9"/><polygon points="345.9,323.0 344.8,322.5 364.1,325.4 364.4,325.9"/><polygon points="325.7,314.0 324.8,312.5 342.5,319.2 343.1,320.5"/><polygon points="367.2,280.6 367.8,277.2 378.1,277.0 379.1,280.4"/><polygon points="361.3,269.6 355.4,268.8 332.7,256.9 336.9,256.8"/><polygon points="284.8,379.6 293.6,375.8 288.5,373.2 282.2,378.3"/><polygon points="296.7,379.2 307.0,376.8 302.3,371.8 293.6,375.8"/><polygon points="406.0,316.2 406.3,314.4 423.3,306.8 422.9,308.7"/><polygon points="268.9,378.6 261.9,373.8 257.3,376.7 266.6,380.0"/><polygon points="299.2,252.4 296.6,254.6 273.0,253.0 272.6,250.6"/><polygon points="398.5,290.7 396.6,287.6 408.9,282.2 411.7,284.9"/><polygon points="380.0,283.8 379.1,280.4 390.2,278.1 392.5,281.3"/><polygon points="384.2,325.0 384.6,324.2 404.0,320.3 402.9,321.2"/><polygon points="159.8,294.9 160.6,291.2 144.4,312.7 143.6,316.6"/><polygon points="337.2,283.7 339.9,280.9 351.9,285.4 350.2,288.6"/><polygon points="364.4,325.9 364.1,325.4 384.2,325.0 383.7,325.5"/><polygon points="324.8,312.5 324.1,310.9 342.1,317.6 342.5,319.2"/><polygon points="406.3,314.4 406.3,312.4 423.3,304.8 423.3,306.8"/><polygon points="243.4,252.0 246.4,253.5 223.4,260.7 218.0,259.9"/><polygon points="257.3,376.7 248.1,373.0 244.2,378.2 254.7,380.1"/><polygon points="272.6,250.6 273.0,253.0 249.7,255.6 246.4,253.5"/><polygon points="353.8,282.1 355.8,278.9 367.2,280.6 366.6,284.1"/><polygon points="400.2,293.8 398.5,290.7 411.7,284.9 414.2,287.6"/><polygon points="400.5,299.7 397.2,296.4 379.0,276.9 381.8,279.6"/><polygon points="344.8,322.5 343.9,321.6 363.8,324.7 364.1,325.4"/><polygon points="406.3,312.4 406.0,310.1 422.9,302.7 423.3,304.8"/><polygon points="334.6,286.6 337.2,283.7 350.2,288.6 348.6,291.8"/><polygon points="366.6,284.1 367.2,280.6 379.1,280.4 380.0,283.8"/><polygon points="401.6,296.8 400.2,293.8 414.2,287.6 416.4,290.3"/><polygon points="324.1,310.9 323.8,309.0 341.9,315.8 342.1,317.6"/><polygon points="406.0,310.1 405.6,307.8 422.2,300.4 422.9,302.7"/><polygon points="286.3,381.3 296.7,379.2 293.6,375.8 284.8,379.6"/><polygon points="380.9,287.3 380.0,283.8 392.5,281.3 394.6,284.4"/><polygon points="384.6,324.2 385.0,323.2 404.9,319.1 404.0,320.3"/><polygon points="402.9,299.7 401.6,296.8 416.4,290.3 418.3,292.9"/><polygon points="160.6,291.2 162.1,287.7 146.1,308.9 144.4,312.7"/><polygon points="405.6,307.8 404.9,305.2 421.3,298.0 422.2,300.4"/><polygon points="404.0,302.5 402.9,299.7 418.3,292.9 419.9,295.5"/><polygon points="404.9,305.2 404.0,302.5 419.9,295.5 421.3,298.0"/><polygon points="332.3,289.4 334.6,286.6 348.6,291.8 347.2,295.0"/><polygon points="351.9,285.4 353.8,282.1 366.6,284.1 366.1,287.6"/><polygon points="323.8,309.0 323.8,307.0 341.9,313.8 341.9,315.8"/><polygon points="364.1,325.4 363.8,324.7 384.6,324.2 384.2,325.0"/><polygon points="266.6,380.0 257.3,376.7 254.7,380.1 265.2,381.8"/><polygon points="275.9,383.1 279.0,377.5 275.5,377.2 275.9,383.1"/><polygon points="275.9,383.1 275.5,377.2 272.0,377.6 275.9,383.1"/><polygon points="208.2,259.7 212.9,259.5 192.1,272.4 185.9,273.5"/><polygon points="343.9,321.6 343.1,320.5 363.6,323.7 363.8,324.7"/><polygon points="275.9,383.1 282.2,378.3 279.0,377.5 275.9,383.1"/><polygon points="275.9,383.1 272.0,377.6 268.9,378.6 275.9,383.1"/><polygon points="330.2,292.2 332.3,289.4 347.2,295.0 345.9,298.0"/><polygon points="323.8,307.0 324.1,304.9 342.1,311.6 341.9,313.8"/><polygon points="397.2,296.4 393.1,293.4 375.5,274.5 379.0,276.9"/><polygon points="381.7,290.7 380.9,287.3 394.6,284.4 396.6,287.6"/><polygon points="366.1,287.6 366.6,284.1 380.0,283.8 380.9,287.3"/><polygon points="385.0,323.2 385.2,321.9 405.6,317.8 404.9,319.1"/><polygon points="355.4,268.8 349.0,268.4 328.1,257.4 332.7,256.9"/><polygon points="275.9,383.1 284.8,379.6 282.2,378.3 275.9,383.1"/><polygon points="328.9,380.2 338.7,378.7 336.2,368.0 326.8,371.2"/><polygon points="328.4,294.9 330.2,292.2 345.9,298.0 344.8,301.0"/><polygon points="318.7,381.4 328.9,380.2 326.8,371.2 317.0,374.1"/><polygon points="324.1,304.9 324.8,302.5 342.5,309.2 342.1,311.6"/><polygon points="338.7,378.7 348.2,376.9 345.2,364.5 336.2,368.0"/><polygon points="275.9,383.1 268.9,378.6 266.6,380.0 275.9,383.1"/><polygon points="308.3,382.3 318.7,381.4 317.0,374.1 307.0,376.8"/><polygon points="348.2,376.9 357.1,374.8 353.8,360.9 345.2,364.5"/><polygon points="326.9,297.6 328.4,294.9 344.8,301.0 343.9,303.9"/><polygon points="324.8,302.5 325.7,300.1 343.1,306.6 342.5,309.2"/><polygon points="323.2,258.5 318.0,260.0 296.6,254.6 299.2,252.4"/><polygon points="325.7,300.1 326.9,297.6 343.9,303.9 343.1,306.6"/><polygon points="350.2,288.6 351.9,285.4 366.1,287.6 365.6,291.0"/><polygon points="162.1,287.7 164.3,284.4 148.7,305.3 146.1,308.9"/><polygon points="297.6,382.9 308.3,382.3 307.0,376.8 296.7,379.2"/><polygon points="363.8,324.7 363.6,323.7 385.0,323.2 384.6,324.2"/><polygon points="357.1,374.8 365.6,372.4 361.9,357.1 353.8,360.9"/><polygon points="275.9,383.1 286.3,381.3 284.8,379.6 275.9,383.1"/><polygon points="343.1,320.5 342.5,319.2 363.4,322.4 363.6,323.7"/><polygon points="275.9,383.1 266.6,380.0 265.2,381.8 275.9,383.1"/><polygon points="286.8,383.2 297.6,382.9 296.7,379.2 286.3,381.3"/><polygon points="382.4,294.0 381.7,290.7 396.6,287.6 398.5,290.7"/><polygon points="385.2,321.9 385.4,320.4 406.0,316.2 405.6,317.8"/><polygon points="365.6,372.4 373.4,369.8 369.5,353.1 361.9,357.1"/><polygon points="365.6,291.0 366.1,287.6 380.9,287.3 381.7,290.7"/><polygon points="275.9,383.1 286.8,383.2 286.3,381.3 275.9,383.1"/><polygon points="265.2,381.8 254.7,380.1 254.4,383.9 265.1,383.6"/><polygon points="254.7,380.1 244.2,378.2 243.8,383.8 254.4,383.9"/><polygon points="373.4,369.8 380.6,366.9 376.4,349.0 369.5,353.1"/><polygon points="348.6,291.8 350.2,288.6 365.6,291.0 365.2,294.4"/><polygon points="275.9,383.1 265.2,381.8 265.1,383.6 275.9,383.1"/><polygon points="244.2,378.2 234.0,375.9 233.4,383.3 243.8,383.8"/><polygon points="246.4,253.5 249.7,255.6 229.2,262.0 223.4,260.7"/><polygon points="342.5,319.2 342.1,317.6 363.3,320.9 363.4,322.4"/><polygon points="234.0,375.9 224.0,373.4 223.3,382.6 233.4,383.3"/><polygon points="383.1,297.3 382.4,294.0 398.5,290.7 400.2,293.8"/><polygon points="363.6,323.7 363.4,322.4 385.2,321.9 385.0,323.2"/><polygon points="393.1,293.4 388.3,290.6 371.4,272.4 375.5,274.5"/><polygon points="385.4,320.4 385.5,318.6 406.3,314.4 406.0,316.2"/><polygon points="296.6,254.6 293.9,257.3 273.4,256.0 273.0,253.0"/><polygon points="380.6,366.9 387.2,363.9 382.7,344.8 376.4,349.0"/><polygon points="224.0,373.4 214.4,370.7 213.5,381.5 223.3,382.6"/><polygon points="164.3,284.4 167.3,281.5 152.1,301.9 148.7,305.3"/><polygon points="275.9,383.1 286.0,385.0 286.8,383.2 275.9,383.1"/><polygon points="273.0,253.0 273.4,256.0 253.1,258.2 249.7,255.6"/><polygon points="275.9,383.1 265.1,383.6 266.1,385.4 275.9,383.1"/><polygon points="365.2,294.4 365.6,291.0 381.7,290.7 382.4,294.0"/><polygon points="212.9,259.5 218.0,259.9 198.9,271.7 192.1,272.4"/><polygon points="347.2,295.0 348.6,291.8 365.2,294.4 364.8,297.7"/><polygon points="214.4,370.7 205.1,367.6 204.1,380.1 213.5,381.5"/><polygon points="383.7,300.5 383.1,297.3 400.2,293.8 401.6,296.8"/><polygon points="385.5,318.6 385.5,316.6 406.3,312.4 406.3,314.4"/><polygon points="342.1,317.6 341.9,315.8 363.3,319.1 363.3,320.9"/><polygon points="387.2,363.9 393.0,360.6 388.3,340.6 382.7,344.8"/><polygon points="275.9,383.1 284.2,386.6 286.0,385.0 275.9,383.1"/><polygon points="363.4,322.4 363.3,320.9 385.4,320.4 385.2,321.9"/><polygon points="275.9,383.1 266.1,385.4 268.2,387.0 275.9,383.1"/><polygon points="205.1,367.6 196.3,364.4 195.2,378.4 204.1,380.1"/><polygon points="384.2,303.6 383.7,300.5 401.6,296.8 402.9,299.7"/><polygon points="385.5,316.6 385.4,314.4 406.0,310.1 406.3,312.4"/><polygon points="286.0,385.0 296.1,386.6 297.6,382.9 286.8,383.2"/><polygon points="345.9,298.0 347.2,295.0 364.8,297.7 364.4,300.9"/><polygon points="349.0,268.4 342.1,268.4 323.2,258.5 328.1,257.4"/><polygon points="341.9,315.8 341.9,313.8 363.3,317.1 363.3,319.1"/><polygon points="364.8,297.7 365.2,294.4 382.4,294.0 383.1,297.3"/><polygon points="275.9,383.1 281.5,387.8 284.2,386.6 275.9,383.1"/><polygon points="384.6,306.5 384.2,303.6 402.9,299.7 404.0,302.5"/><polygon points="385.4,314.4 385.2,311.9 405.6,307.8 406.0,310.1"/><polygon points="275.9,383.1 268.2,387.0 271.1,388.1 275.9,383.1"/><polygon points="393.0,360.6 398.1,357.1 393.1,336.2 388.3,340.6"/><polygon points="196.3,364.4 188.1,360.9 186.8,376.4 195.2,378.4"/><polygon points="385.0,309.3 384.6,306.5 404.0,302.5 404.9,305.2"/><polygon points="385.2,311.9 385.0,309.3 404.9,305.2 405.6,307.8"/><polygon points="265.1,383.6 254.4,383.9 256.4,387.4 266.1,385.4"/><polygon points="344.8,301.0 345.9,298.0 364.4,300.9 364.1,304.0"/><polygon points="275.9,383.1 278.1,388.5 281.5,387.8 275.9,383.1"/><polygon points="363.3,320.9 363.3,319.1 385.5,318.6 385.4,320.4"/><polygon points="167.3,281.5 170.9,279.0 156.3,298.6 152.1,301.9"/><polygon points="275.9,383.1 271.1,388.1 274.5,388.6 275.9,383.1"/><polygon points="341.9,313.8 342.1,311.6 363.3,314.9 363.3,317.1"/><polygon points="388.3,290.6 382.7,288.0 366.6,270.8 371.4,272.4"/><polygon points="275.9,383.1 274.5,388.6 278.1,388.5 275.9,383.1"/><polygon points="343.9,303.9 344.8,301.0 364.1,304.0 363.8,307.0"/><polygon points="364.4,300.9 364.8,297.7 383.1,297.3 383.7,300.5"/><polygon points="342.1,311.6 342.5,309.2 363.4,312.4 363.3,314.9"/><polygon points="188.1,360.9 180.4,357.3 179.0,374.1 186.8,376.4"/><polygon points="296.1,386.6 306.1,387.8 308.3,382.3 297.6,382.9"/><polygon points="343.1,306.6 343.9,303.9 363.8,307.0 363.6,309.8"/><polygon points="342.5,309.2 343.1,306.6 363.6,309.8 363.4,312.4"/><polygon points="398.1,357.1 402.3,353.5 397.2,331.9 393.1,336.2"/><polygon points="363.3,319.1 363.3,317.1 385.5,316.6 385.5,318.6"/><polygon points="318.0,260.0 312.5,262.0 293.9,257.3 296.6,254.6"/><polygon points="364.1,304.0 364.4,300.9 383.7,300.5 384.2,303.6"/><polygon points="363.3,317.1 363.3,314.9 385.4,314.4 385.5,316.6"/><polygon points="180.4,357.3 173.3,353.5 171.9,371.6 179.0,374.1"/><polygon points="254.4,383.9 243.8,383.8 246.8,389.1 256.4,387.4"/><polygon points="363.8,307.0 364.1,304.0 384.2,303.6 384.6,306.5"/><polygon points="284.2,386.6 292.5,389.8 296.1,386.6 286.0,385.0"/><polygon points="363.3,314.9 363.4,312.4 385.2,311.9 385.4,314.4"/><polygon points="402.3,353.5 405.8,349.8 400.5,327.5 397.2,331.9"/><polygon points="363.6,309.8 363.8,307.0 384.6,306.5 385.0,309.3"/><polygon points="218.0,259.9 223.4,260.7 206.1,271.4 198.9,271.7"/><polygon points="306.1,387.8 315.8,388.7 318.7,381.4 308.3,382.3"/><polygon points="363.4,312.4 363.6,309.8 385.0,309.3 385.2,311.9"/><polygon points="249.7,255.6 253.1,258.2 235.3,263.7 229.2,262.0"/><polygon points="170.9,279.0 175.3,276.8 161.2,295.6 156.3,298.6"/><polygon points="266.1,385.4 256.4,387.4 260.5,390.5 268.2,387.0"/><polygon points="173.3,353.5 166.9,349.6 165.4,368.8 171.9,371.6"/><polygon points="382.7,288.0 376.4,285.8 361.3,269.6 366.6,270.8"/><polygon points="405.8,349.8 408.4,345.9 403.0,323.2 400.5,327.5"/><polygon points="293.9,257.3 291.1,260.5 273.8,259.4 273.4,256.0"/><polygon points="342.1,268.4 334.8,268.8 318.0,260.0 323.2,258.5"/><polygon points="166.9,349.6 161.2,345.6 159.6,365.7 165.4,368.8"/><polygon points="243.8,383.8 233.4,383.3 237.4,390.4 246.8,389.1"/><polygon points="315.8,388.7 325.3,389.2 328.9,380.2 318.7,381.4"/><polygon points="273.4,256.0 273.8,259.4 256.7,261.3 253.1,258.2"/><polygon points="281.5,387.8 287.0,392.2 292.5,389.8 284.2,386.6"/><polygon points="268.2,387.0 260.5,390.5 266.3,392.7 271.1,388.1"/><polygon points="408.4,345.9 410.1,342.0 404.7,319.0 403.0,323.2"/><polygon points="175.3,276.8 180.3,274.9 166.9,292.8 161.2,295.6"/><polygon points="161.2,345.6 156.3,341.5 154.5,362.5 159.6,365.7"/><polygon points="292.5,389.8 300.6,392.6 306.1,387.8 296.1,386.6"/><polygon points="325.3,389.2 334.5,389.3 338.7,378.7 328.9,380.2"/><polygon points="278.1,388.5 280.3,393.6 287.0,392.2 281.5,387.8"/><polygon points="376.4,285.8 369.5,283.8 355.4,268.8 361.3,269.6"/><polygon points="271.1,388.1 266.3,392.7 273.2,393.7 274.5,388.6"/><polygon points="233.4,383.3 223.3,382.6 228.2,391.3 237.4,390.4"/><polygon points="223.4,260.7 229.2,262.0 213.8,271.5 206.1,271.4"/><polygon points="256.4,387.4 246.8,389.1 253.0,393.6 260.5,390.5"/><polygon points="274.5,388.6 273.2,393.7 280.3,393.6 278.1,388.5"/><polygon points="410.1,342.0 411.0,338.0 405.5,314.9 404.7,319.0"/><polygon points="156.3,341.5 152.1,337.3 150.3,359.1 154.5,362.5"/><polygon points="312.5,262.0 306.8,264.5 291.1,260.5 293.9,257.3"/><polygon points="334.5,389.3 343.3,389.1 348.2,376.9 338.7,378.7"/><polygon points="180.3,274.9 185.9,273.5 173.3,290.3 166.9,292.8"/><polygon points="253.1,258.2 256.7,261.3 241.7,265.9 235.3,263.7"/><polygon points="152.1,337.3 148.7,333.1 146.9,355.5 150.3,359.1"/><polygon points="411.0,338.0 411.0,333.9 405.5,310.8 405.5,314.9"/><polygon points="334.8,268.8 327.1,269.7 312.5,262.0 318.0,260.0"/><polygon points="223.3,382.6 213.5,381.5 219.4,391.8 228.2,391.3"/><polygon points="300.6,392.6 308.6,395.0 315.8,388.7 306.1,387.8"/><polygon points="369.5,283.8 361.9,282.2 349.0,268.4 355.4,268.8"/><polygon points="287.0,392.2 292.5,396.2 300.6,392.6 292.5,389.8"/><polygon points="148.7,333.1 146.1,328.9 144.3,351.7 146.9,355.5"/><polygon points="343.3,389.1 351.6,388.5 357.1,374.8 348.2,376.9"/><polygon points="411.0,333.9 410.1,329.9 404.7,307.0 405.5,310.8"/><polygon points="291.1,260.5 288.2,264.2 274.2,263.3 273.8,259.4"/><polygon points="260.5,390.5 253.0,393.6 261.6,396.9 266.3,392.7"/><polygon points="273.8,259.4 274.2,263.3 260.4,264.8 256.7,261.3"/><polygon points="246.8,389.1 237.4,390.4 245.6,396.4 253.0,393.6"/><polygon points="185.9,273.5 192.1,272.4 180.4,288.0 173.3,290.3"/><polygon points="229.2,262.0 235.3,263.7 221.9,272.0 213.8,271.5"/><polygon points="213.5,381.5 204.1,380.1 210.9,392.0 219.4,391.8"/><polygon points="146.1,328.9 144.4,324.8 142.6,347.9 144.3,351.7"/><polygon points="410.1,329.9 408.4,325.9 403.0,303.2 404.7,307.0"/><polygon points="351.6,388.5 359.5,387.5 365.6,372.4 357.1,374.8"/><polygon points="280.3,393.6 282.5,398.2 292.5,396.2 287.0,392.2"/><polygon points="266.3,392.7 261.6,396.9 271.9,398.5 273.2,393.7"/><polygon points="361.9,282.2 353.8,281.0 342.1,268.4 349.0,268.4"/><polygon points="308.6,395.0 316.3,397.0 325.3,389.2 315.8,388.7"/><polygon points="306.8,264.5 300.8,267.4 288.2,264.2 291.1,260.5"/><polygon points="273.2,393.7 271.9,398.5 282.5,398.2 280.3,393.6"/><polygon points="144.4,324.8 143.6,320.7 141.7,343.9 142.6,347.9"/><polygon points="327.1,269.7 319.1,271.0 306.8,264.5 312.5,262.0"/><polygon points="204.1,380.1 195.2,378.4 202.8,391.8 210.9,392.0"/><polygon points="192.1,272.4 198.9,271.7 188.1,286.1 180.4,288.0"/><polygon points="408.4,325.9 405.8,321.9 400.5,299.7 403.0,303.2"/><polygon points="256.7,261.3 260.4,264.8 248.2,268.6 241.7,265.9"/><polygon points="359.5,387.5 366.8,386.2 373.4,369.8 365.6,372.4"/><polygon points="292.5,396.2 297.8,399.8 308.6,395.0 300.6,392.6"/><polygon points="237.4,390.4 228.2,391.3 238.3,398.7 245.6,396.4"/><polygon points="143.6,320.7 143.6,316.6 141.7,339.9 141.7,343.9"/><polygon points="235.3,263.7 241.7,265.9 230.4,272.9 221.9,272.0"/><polygon points="405.8,321.9 402.3,318.0 397.2,296.4 400.5,299.7"/><polygon points="253.0,393.6 245.6,396.4 257.0,400.7 261.6,396.9"/><polygon points="353.8,281.0 345.2,280.0 334.8,268.8 342.1,268.4"/><polygon points="195.2,378.4 186.8,376.4 195.2,391.2 202.8,391.8"/><polygon points="366.8,386.2 373.5,384.6 380.6,366.9 373.4,369.8"/><polygon points="316.3,397.0 323.9,398.6 334.5,389.3 325.3,389.2"/><polygon points="198.9,271.7 206.1,271.4 196.3,284.4 188.1,286.1"/><polygon points="143.6,316.6 144.4,312.7 142.6,335.8 141.7,339.9"/><polygon points="288.2,264.2 285.2,268.3 274.6,267.6 274.2,263.3"/><polygon points="274.2,263.3 274.6,267.6 264.2,268.8 260.4,264.8"/><polygon points="402.3,318.0 398.1,314.2 393.1,293.4 397.2,296.4"/><polygon points="319.1,271.0 310.8,272.6 300.8,267.4 306.8,264.5"/><polygon points="282.5,398.2 284.7,402.5 297.8,399.8 292.5,396.2"/><polygon points="144.4,312.7 146.1,308.9 144.3,331.7 142.6,335.8"/><polygon points="373.5,384.6 379.6,382.6 387.2,363.9 380.6,366.9"/><polygon points="186.8,376.4 179.0,374.1 188.2,390.2 195.2,391.2"/><polygon points="228.2,391.3 219.4,391.8 231.4,400.7 238.3,398.7"/><polygon points="300.8,267.4 294.7,270.8 285.2,268.3 288.2,264.2"/><polygon points="261.6,396.9 257.0,400.7 270.6,402.8 271.9,398.5"/><polygon points="345.2,280.0 336.2,279.4 327.1,269.7 334.8,268.8"/><polygon points="206.1,271.4 213.8,271.5 205.1,283.1 196.3,284.4"/><polygon points="398.1,314.2 393.0,310.6 388.3,290.6 393.1,293.4"/><polygon points="260.4,264.8 264.2,268.8 255.0,271.6 248.2,268.6"/><polygon points="297.8,399.8 303.0,402.9 316.3,397.0 308.6,395.0"/><polygon points="271.9,398.5 270.6,402.8 284.7,402.5 282.5,398.2"/><polygon points="241.7,265.9 248.2,268.6 239.1,274.2 230.4,272.9"/><polygon points="323.9,398.6 331.0,399.8 343.3,389.1 334.5,389.3"/><polygon points="146.1,308.9 148.7,305.3 146.9,327.7 144.3,331.7"/><polygon points="379.6,382.6 385.0,380.3 393.0,360.6 387.2,363.9"/><polygon points="179.0,374.1 171.9,371.6 181.7,388.9 188.2,390.2"/><polygon points="245.6,396.4 238.3,398.7 252.6,404.0 257.0,400.7"/><polygon points="393.0,310.6 387.2,307.0 382.7,288.0 388.3,290.6"/><polygon points="148.7,305.3 152.1,301.9 150.3,323.6 146.9,327.7"/><polygon points="213.8,271.5 221.9,272.0 214.4,282.1 205.1,283.1"/><polygon points="336.2,279.4 326.8,279.2 319.1,271.0 327.1,269.7"/><polygon points="385.0,380.3 389.8,377.7 398.1,357.1 393.0,360.6"/><polygon points="219.4,391.8 210.9,392.0 224.7,402.1 231.4,400.7"/><polygon points="310.8,272.6 302.3,274.7 294.7,270.8 300.8,267.4"/><polygon points="387.2,307.0 380.6,303.7 376.4,285.8 382.7,288.0"/><polygon points="285.2,268.3 282.1,272.9 275.0,272.4 274.6,267.6"/><polygon points="274.6,267.6 275.0,272.4 268.0,273.2 264.2,268.8"/><polygon points="171.9,371.6 165.4,368.8 175.8,387.1 181.7,388.9"/><polygon points="152.1,301.9 156.3,298.6 154.5,319.6 150.3,323.6"/><polygon points="331.0,399.8 337.9,400.5 351.6,388.5 343.3,389.1"/><polygon points="248.2,268.6 255.0,271.6 248.1,275.9 239.1,274.2"/><polygon points="284.7,402.5 286.7,406.2 303.0,402.9 297.8,399.8"/><polygon points="294.7,270.8 288.5,274.5 282.1,272.9 285.2,268.3"/><polygon points="389.8,377.7 393.7,374.8 402.3,353.5 398.1,357.1"/><polygon points="303.0,402.9 308.0,405.6 323.9,398.6 316.3,397.0"/><polygon points="380.6,303.7 373.4,300.5 369.5,283.8 376.4,285.8"/><polygon points="221.9,272.0 230.4,272.9 224.0,281.4 214.4,282.1"/><polygon points="156.3,298.6 161.2,295.6 159.6,315.7 154.5,319.6"/><polygon points="257.0,400.7 252.6,404.0 269.3,406.6 270.6,402.8"/><polygon points="264.2,268.8 268.0,273.2 261.9,275.1 255.0,271.6"/><polygon points="326.8,279.2 317.0,279.3 310.8,272.6 319.1,271.0"/><polygon points="165.4,368.8 159.6,365.7 170.5,385.1 175.8,387.1"/><polygon points="270.6,402.8 269.3,406.6 286.7,406.2 284.7,402.5"/><polygon points="238.3,398.7 231.4,400.7 248.2,406.9 252.6,404.0"/><polygon points="373.4,300.5 365.6,297.6 361.9,282.2 369.5,283.8"/><polygon points="161.2,295.6 166.9,292.8 165.4,312.0 159.6,315.7"/><polygon points="210.9,392.0 202.8,391.8 218.3,403.2 224.7,402.1"/><polygon points="393.7,374.8 397.0,371.7 405.8,349.8 402.3,353.5"/><polygon points="337.9,400.5 344.3,400.8 359.5,387.5 351.6,388.5"/><polygon points="302.3,274.7 293.6,277.1 288.5,274.5 294.7,270.8"/><polygon points="230.4,272.9 239.1,274.2 234.0,281.1 224.0,281.4"/><polygon points="166.9,292.8 173.3,290.3 171.9,308.3 165.4,312.0"/><polygon points="159.6,365.7 154.5,362.5 166.0,382.7 170.5,385.1"/><polygon points="365.6,297.6 357.1,294.8 353.8,281.0 361.9,282.2"/><polygon points="255.0,271.6 261.9,275.1 257.3,277.9 248.1,275.9"/><polygon points="397.0,371.7 399.4,368.2 408.4,345.9 405.8,349.8"/><polygon points="317.0,279.3 307.0,279.7 302.3,274.7 310.8,272.6"/><polygon points="282.1,272.9 279.0,277.8 275.5,277.6 275.0,272.4"/><polygon points="173.3,290.3 180.4,288.0 179.0,304.8 171.9,308.3"/><polygon points="275.0,272.4 275.5,277.6 272.0,278.0 268.0,273.2"/><polygon points="308.0,405.6 312.9,407.8 331.0,399.8 323.9,398.6"/><polygon points="357.1,294.8 348.2,292.4 345.2,280.0 353.8,281.0"/><polygon points="239.1,274.2 248.1,275.9 244.2,281.1 234.0,281.1"/><polygon points="286.7,406.2 288.7,409.6 308.0,405.6 303.0,402.9"/><polygon points="154.5,362.5 150.3,359.1 162.2,380.0 166.0,382.7"/><polygon points="288.5,274.5 282.2,278.6 279.0,277.8 282.1,272.9"/><polygon points="399.4,368.2 401.0,364.6 410.1,342.0 408.4,345.9"/><polygon points="202.8,391.8 195.2,391.2 212.4,403.7 218.3,403.2"/><polygon points="344.3,400.8 350.3,400.7 366.8,386.2 359.5,387.5"/><polygon points="268.0,273.2 272.0,278.0 268.9,278.9 261.9,275.1"/><polygon points="180.4,288.0 188.1,286.1 186.8,301.5 179.0,304.8"/><polygon points="252.6,404.0 248.2,406.9 268.1,410.0 269.3,406.6"/><polygon points="348.2,292.4 338.7,290.2 336.2,279.4 345.2,280.0"/><polygon points="231.4,400.7 224.7,402.1 244.1,409.4 248.2,406.9"/><polygon points="307.0,279.7 296.7,280.5 293.6,277.1 302.3,274.7"/><polygon points="293.6,277.1 284.8,279.9 282.2,278.6 288.5,274.5"/><polygon points="188.1,286.1 196.3,284.4 195.2,298.4 186.8,301.5"/><polygon points="401.0,364.6 401.8,360.8 411.0,338.0 410.1,342.0"/><polygon points="150.3,359.1 146.9,355.5 159.1,376.9 162.2,380.0"/><polygon points="269.3,406.6 268.1,410.0 288.7,409.6 286.7,406.2"/><polygon points="261.9,275.1 268.9,278.9 266.6,280.4 257.3,277.9"/><polygon points="338.7,290.2 328.9,288.2 326.8,279.2 336.2,279.4"/><polygon points="248.1,275.9 257.3,277.9 254.7,281.4 244.2,281.1"/><polygon points="196.3,284.4 205.1,283.1 204.1,295.6 195.2,298.4"/><polygon points="401.8,360.8 401.8,356.7 411.0,333.9 411.0,338.0"/><polygon points="350.3,400.7 355.8,400.1 373.5,384.6 366.8,386.2"/><polygon points="328.9,288.2 318.7,286.6 317.0,279.3 326.8,279.2"/><polygon points="195.2,391.2 188.2,390.2 206.8,403.9 212.4,403.7"/><polygon points="205.1,283.1 214.4,282.1 213.5,292.9 204.1,295.6"/><polygon points="312.9,407.8 317.4,409.6 337.9,400.5 331.0,399.8"/><polygon points="146.9,355.5 144.3,351.7 156.7,373.6 159.1,376.9"/><polygon points="296.7,280.5 286.3,281.6 284.8,279.9 293.6,277.1"/><polygon points="257.3,277.9 266.6,280.4 265.2,282.1 254.7,281.4"/><polygon points="318.7,286.6 308.3,285.2 307.0,279.7 317.0,279.3"/><polygon points="214.4,282.1 224.0,281.4 223.3,290.6 213.5,292.9"/><polygon points="401.8,356.7 401.0,352.5 410.1,329.9 411.0,333.9"/><polygon points="279.0,277.8 275.9,283.1 275.9,283.1 275.5,277.6"/><polygon points="275.5,277.6 275.9,283.1 275.9,283.1 272.0,278.0"/><polygon points="282.2,278.6 275.9,283.1 275.9,283.1 279.0,277.8"/><polygon points="272.0,278.0 275.9,283.1 275.9,283.1 268.9,278.9"/><polygon points="288.7,409.6 290.7,412.4 312.9,407.8 308.0,405.6"/><polygon points="224.0,281.4 234.0,281.1 233.4,288.5 223.3,290.6"/><polygon points="308.3,285.2 297.6,284.2 296.7,280.5 307.0,279.7"/><polygon points="144.3,351.7 142.6,347.9 155.1,370.1 156.7,373.6"/><polygon points="284.8,279.9 275.9,283.1 275.9,283.1 282.2,278.6"/><polygon points="224.7,402.1 218.3,403.2 240.1,411.3 244.1,409.4"/><polygon points="268.9,278.9 275.9,283.1 275.9,283.1 266.6,280.4"/><polygon points="401.0,352.5 399.4,348.2 408.4,325.9 410.1,329.9"/><polygon points="234.0,281.1 244.2,281.1 243.8,286.7 233.4,288.5"/><polygon points="248.2,406.9 244.1,409.4 266.9,412.9 268.1,410.0"/><polygon points="355.8,400.1 360.8,399.1 379.6,382.6 373.5,384.6"/><polygon points="286.3,281.6 275.9,283.1 275.9,283.1 284.8,279.9"/><polygon points="297.6,284.2 286.8,283.5 286.3,281.6 296.7,280.5"/><polygon points="266.6,280.4 275.9,283.1 275.9,283.1 265.2,282.1"/><polygon points="244.2,281.1 254.7,281.4 254.4,285.2 243.8,286.7"/><polygon points="188.2,390.2 181.7,388.9 201.7,403.5 206.8,403.9"/><polygon points="254.7,281.4 265.2,282.1 265.1,284.0 254.4,285.2"/><polygon points="142.6,347.9 141.7,343.9 154.3,366.2 155.1,370.1"/><polygon points="286.8,283.5 275.9,283.1 275.9,283.1 286.3,281.6"/><polygon points="399.4,348.2 397.0,343.8 405.8,321.9 408.4,325.9"/><polygon points="265.2,282.1 275.9,283.1 275.9,283.1 265.1,284.0"/><polygon points="268.1,410.0 266.9,412.9 290.7,412.4 288.7,409.6"/><polygon points="317.4,409.6 321.8,410.8 344.3,400.8 337.9,400.5"/><polygon points="286.0,285.3 275.9,283.1 275.9,283.1 286.8,283.5"/><polygon points="265.1,284.0 275.9,283.1 275.9,283.1 266.1,285.8"/><polygon points="397.0,343.8 393.7,339.4 402.3,318.0 405.8,321.9"/><polygon points="141.7,343.9 141.7,339.9 154.3,362.2 154.3,366.2"/><polygon points="284.2,286.9 275.9,283.1 275.9,283.1 286.0,285.3"/><polygon points="360.8,399.1 365.3,397.7 385.0,380.3 379.6,382.6"/><polygon points="296.1,287.9 286.0,285.3 286.8,283.5 297.6,284.2"/><polygon points="266.1,285.8 275.9,283.1 275.9,283.1 268.2,287.3"/><polygon points="393.7,339.4 389.8,334.9 398.1,314.2 402.3,318.0"/><polygon points="281.5,288.2 275.9,283.1 275.9,283.1 284.2,286.9"/><polygon points="254.4,285.2 265.1,284.0 266.1,285.8 256.4,288.7"/><polygon points="268.2,287.3 275.9,283.1 275.9,283.1 271.1,288.4"/><polygon points="181.7,388.9 175.8,387.1 197.1,402.7 201.7,403.5"/><polygon points="306.1,290.7 296.1,287.9 297.6,284.2 308.3,285.2"/><polygon points="278.1,288.8 275.9,283.1 275.9,283.1 281.5,288.2"/><polygon points="141.7,339.9 142.6,335.8 155.1,358.0 154.3,362.2"/><polygon points="389.8,334.9 385.0,330.3 393.0,310.6 398.1,314.2"/><polygon points="271.1,288.4 275.9,283.1 275.9,283.1 274.5,288.9"/><polygon points="218.3,403.2 212.4,403.7 236.4,412.7 240.1,411.3"/><polygon points="274.5,288.9 275.9,283.1 275.9,283.1 278.1,288.8"/><polygon points="290.7,412.4 292.5,414.7 317.4,409.6 312.9,407.8"/><polygon points="315.8,293.8 306.1,290.7 308.3,285.2 318.7,286.6"/><polygon points="385.0,330.3 379.6,325.8 387.2,307.0 393.0,310.6"/><polygon points="243.8,286.7 254.4,285.2 256.4,288.7 246.8,292.0"/><polygon points="325.3,297.2 315.8,293.8 318.7,286.6 328.9,288.2"/><polygon points="244.1,409.4 240.1,411.3 265.8,415.3 266.9,412.9"/><polygon points="142.6,335.8 144.3,331.7 156.7,353.6 155.1,358.0"/><polygon points="379.6,325.8 373.5,321.4 380.6,303.7 387.2,307.0"/><polygon points="292.5,291.1 284.2,286.9 286.0,285.3 296.1,287.9"/><polygon points="365.3,397.7 369.1,395.8 389.8,377.7 385.0,380.3"/><polygon points="334.5,300.8 325.3,297.2 328.9,288.2 338.7,290.2"/><polygon points="373.5,321.4 366.8,317.0 373.4,300.5 380.6,303.7"/><polygon points="343.3,304.6 334.5,300.8 338.7,290.2 348.2,292.4"/><polygon points="321.8,410.8 325.8,411.6 350.3,400.7 344.3,400.8"/><polygon points="366.8,317.0 359.5,312.7 365.6,297.6 373.4,300.5"/><polygon points="256.4,288.7 266.1,285.8 268.2,287.3 260.5,291.8"/><polygon points="233.4,288.5 243.8,286.7 246.8,292.0 237.4,295.5"/><polygon points="351.6,308.5 343.3,304.6 348.2,292.4 357.1,294.8"/><polygon points="359.5,312.7 351.6,308.5 357.1,294.8 365.6,297.6"/><polygon points="144.3,331.7 146.9,327.7 159.1,349.1 156.7,353.6"/><polygon points="266.9,412.9 265.8,415.3 292.5,414.7 290.7,412.4"/><polygon points="175.8,387.1 170.5,385.1 192.9,401.5 197.1,402.7"/><polygon points="223.3,290.6 233.4,288.5 237.4,295.5 228.2,299.3"/><polygon points="146.9,327.7 150.3,323.6 162.2,344.5 159.1,349.1"/><polygon points="287.0,293.5 281.5,288.2 284.2,286.9 292.5,291.1"/><polygon points="260.5,291.8 268.2,287.3 271.1,288.4 266.3,294.0"/><polygon points="213.5,292.9 223.3,290.6 228.2,299.3 219.4,303.3"/><polygon points="300.6,295.5 292.5,291.1 296.1,287.9 306.1,290.7"/><polygon points="369.1,395.8 372.4,393.6 393.7,374.8 389.8,377.7"/><polygon points="150.3,323.6 154.5,319.6 166.0,339.8 162.2,344.5"/><polygon points="212.4,403.7 206.8,403.9 232.9,413.6 236.4,412.7"/><polygon points="204.1,295.6 213.5,292.9 219.4,303.3 210.9,307.5"/><polygon points="154.5,319.6 159.6,315.7 170.5,335.1 166.0,339.8"/><polygon points="280.3,294.9 278.1,288.8 281.5,288.2 287.0,293.5"/><polygon points="246.8,292.0 256.4,288.7 260.5,291.8 253.0,296.5"/><polygon points="292.5,414.7 294.2,416.5 321.8,410.8 317.4,409.6"/><polygon points="266.3,294.0 271.1,288.4 274.5,288.9 273.2,295.0"/><polygon points="195.2,298.4 204.1,295.6 210.9,307.5 202.8,311.8"/><polygon points="159.6,315.7 165.4,312.0 175.8,330.3 170.5,335.1"/><polygon points="273.2,295.0 274.5,288.9 278.1,288.8 280.3,294.9"/><polygon points="186.8,301.5 195.2,298.4 202.8,311.8 195.2,316.3"/><polygon points="165.4,312.0 171.9,308.3 181.7,325.6 175.8,330.3"/><polygon points="170.5,385.1 166.0,382.7 189.3,399.8 192.9,401.5"/><polygon points="179.0,304.8 186.8,301.5 195.2,316.3 188.2,320.9"/><polygon points="171.9,308.3 179.0,304.8 188.2,320.9 181.7,325.6"/><polygon points="325.8,411.6 329.5,411.8 355.8,400.1 350.3,400.7"/><polygon points="240.1,411.3 236.4,412.7 264.7,417.1 265.8,415.3"/><polygon points="308.6,300.1 300.6,295.5 306.1,290.7 315.8,293.8"/><polygon points="372.4,393.6 375.0,390.9 397.0,371.7 393.7,374.8"/><polygon points="292.5,299.1 287.0,293.5 292.5,291.1 300.6,295.5"/><polygon points="237.4,295.5 246.8,292.0 253.0,296.5 245.6,301.5"/><polygon points="265.8,415.3 264.7,417.1 294.2,416.5 292.5,414.7"/><polygon points="253.0,296.5 260.5,291.8 266.3,294.0 261.6,299.8"/><polygon points="166.0,382.7 162.2,380.0 186.3,397.7 189.3,399.8"/><polygon points="206.8,403.9 201.7,403.5 229.8,414.0 232.9,413.6"/><polygon points="316.3,305.0 308.6,300.1 315.8,293.8 325.3,297.2"/><polygon points="375.0,390.9 377.0,387.9 399.4,368.2 397.0,371.7"/><polygon points="329.5,411.8 332.8,411.5 360.8,399.1 355.8,400.1"/><polygon points="282.5,301.1 280.3,294.9 287.0,293.5 292.5,299.1"/><polygon points="294.2,416.5 295.8,417.7 325.8,411.6 321.8,410.8"/><polygon points="261.6,299.8 266.3,294.0 273.2,295.0 271.9,301.4"/><polygon points="228.2,299.3 237.4,295.5 245.6,301.5 238.3,306.7"/><polygon points="323.9,310.1 316.3,305.0 325.3,297.2 334.5,300.8"/><polygon points="377.0,387.9 378.3,384.5 401.0,364.6 399.4,368.2"/><polygon points="271.9,301.4 273.2,295.0 280.3,294.9 282.5,301.1"/><polygon points="162.2,380.0 159.1,376.9 183.9,395.1 186.3,397.7"/><polygon points="297.8,304.9 292.5,299.1 300.6,295.5 308.6,300.1"/><polygon points="236.4,412.7 232.9,413.6 263.7,418.4 264.7,417.1"/><polygon points="245.6,301.5 253.0,296.5 261.6,299.8 257.0,305.8"/><polygon points="331.0,315.3 323.9,310.1 334.5,300.8 343.3,304.6"/><polygon points="378.3,384.5 379.0,380.8 401.8,360.8 401.0,364.6"/><polygon points="201.7,403.5 197.1,402.7 226.9,413.9 229.8,414.0"/><polygon points="219.4,303.3 228.2,299.3 238.3,306.7 231.4,312.1"/><polygon points="264.7,417.1 263.7,418.4 295.8,417.7 294.2,416.5"/><polygon points="159.1,376.9 156.7,373.6 182.0,392.2 183.9,395.1"/><polygon points="332.8,411.5 335.8,410.7 365.3,397.7 360.8,399.1"/><polygon points="337.9,320.6 331.0,315.3 343.3,304.6 351.6,308.5"/><polygon points="379.0,380.8 379.0,376.7 401.8,356.7 401.8,360.8"/><polygon points="284.7,307.6 282.5,301.1 292.5,299.1 297.8,304.9"/><polygon points="295.8,417.7 297.3,418.4 329.5,411.8 325.8,411.6"/><polygon points="303.0,310.9 297.8,304.9 308.6,300.1 316.3,305.0"/><polygon points="210.9,307.5 219.4,303.3 231.4,312.1 224.7,317.6"/><polygon points="257.0,305.8 261.6,299.8 271.9,301.4 270.6,307.9"/><polygon points="156.7,373.6 155.1,370.1 180.8,388.9 182.0,392.2"/><polygon points="344.3,326.0 337.9,320.6 351.6,308.5 359.5,312.7"/><polygon points="379.0,376.7 378.3,372.4 401.0,352.5 401.8,356.7"/><polygon points="270.6,307.9 271.9,301.4 282.5,301.1 284.7,307.6"/><polygon points="238.3,306.7 245.6,301.5 257.0,305.8 252.6,312.0"/><polygon points="232.9,413.6 229.8,414.0 262.8,419.1 263.7,418.4"/><polygon points="197.1,402.7 192.9,401.5 224.3,413.2 226.9,413.9"/><polygon points="350.3,331.4 344.3,326.0 359.5,312.7 366.8,317.0"/><polygon points="378.3,372.4 377.0,367.9 399.4,348.2 401.0,352.5"/><polygon points="202.8,311.8 210.9,307.5 224.7,317.6 218.3,323.2"/><polygon points="335.8,410.7 338.4,409.4 369.1,395.8 365.3,397.7"/><polygon points="155.1,370.1 154.3,366.2 180.2,385.2 180.8,388.9"/><polygon points="355.8,336.9 350.3,331.4 366.8,317.0 373.5,321.4"/><polygon points="377.0,367.9 375.0,363.1 397.0,343.8 399.4,348.2"/><polygon points="308.0,317.1 303.0,310.9 316.3,305.0 323.9,310.1"/><polygon points="263.7,418.4 262.8,419.1 297.3,418.4 295.8,417.7"/><polygon points="360.8,342.3 355.8,336.9 373.5,321.4 379.6,325.8"/><polygon points="375.0,363.1 372.4,358.1 393.7,339.4 397.0,343.8"/><polygon points="195.2,316.3 202.8,311.8 218.3,323.2 212.4,328.9"/><polygon points="365.3,347.7 360.8,342.3 379.6,325.8 385.0,330.3"/><polygon points="372.4,358.1 369.1,352.9 389.8,334.9 393.7,339.4"/><polygon points="369.1,352.9 365.3,347.7 385.0,330.3 389.8,334.9"/><polygon points="286.7,314.2 284.7,307.6 297.8,304.9 303.0,310.9"/><polygon points="154.3,366.2 154.3,362.2 180.2,381.1 180.2,385.2"/><polygon points="297.3,418.4 298.6,418.5 332.8,411.5 329.5,411.8"/><polygon points="252.6,312.0 257.0,305.8 270.6,307.9 269.3,314.6"/><polygon points="231.4,312.1 238.3,306.7 252.6,312.0 248.2,318.4"/><polygon points="188.2,320.9 195.2,316.3 212.4,328.9 206.8,334.6"/><polygon points="192.9,401.5 189.3,399.8 222.1,412.0 224.3,413.2"/><polygon points="338.4,409.4 340.6,407.7 372.4,393.6 369.1,395.8"/><polygon points="154.3,362.2 155.1,358.0 180.8,376.8 180.2,381.1"/><polygon points="269.3,314.6 270.6,307.9 284.7,307.6 286.7,314.2"/><polygon points="229.8,414.0 226.9,413.9 262.0,419.3 262.8,419.1"/><polygon points="181.7,325.6 188.2,320.9 206.8,334.6 201.7,340.3"/><polygon points="312.9,323.3 308.0,317.1 323.9,310.1 331.0,315.3"/><polygon points="155.1,358.0 156.7,353.6 182.0,372.2 180.8,376.8"/><polygon points="175.8,330.3 181.7,325.6 201.7,340.3 197.1,345.9"/><polygon points="156.7,353.6 159.1,349.1 183.9,367.3 182.0,372.2"/><polygon points="170.5,335.1 175.8,330.3 197.1,345.9 192.9,351.5"/><polygon points="159.1,349.1 162.2,344.5 186.3,362.2 183.9,367.3"/><polygon points="262.8,419.1 262.0,419.3 298.6,418.5 297.3,418.4"/><polygon points="340.6,407.7 342.3,405.4 375.0,390.9 372.4,393.6"/><polygon points="166.0,339.8 170.5,335.1 192.9,351.5 189.3,356.9"/><polygon points="224.7,317.6 231.4,312.1 248.2,318.4 244.1,324.8"/><polygon points="162.2,344.5 166.0,339.8 189.3,356.9 186.3,362.2"/><polygon points="288.7,321.0 286.7,314.2 303.0,310.9 308.0,317.1"/><polygon points="189.3,399.8 186.3,397.7 220.2,410.3 222.1,412.0"/><polygon points="298.6,418.5 299.8,418.1 335.8,410.7 332.8,411.5"/><polygon points="248.2,318.4 252.6,312.0 269.3,314.6 268.1,321.5"/><polygon points="317.4,329.6 312.9,323.3 331.0,315.3 337.9,320.6"/><polygon points="226.9,413.9 224.3,413.2 261.3,418.9 262.0,419.3"/><polygon points="268.1,321.5 269.3,314.6 286.7,314.2 288.7,321.0"/><polygon points="342.3,405.4 343.7,402.6 377.0,387.9 375.0,390.9"/><polygon points="218.3,323.2 224.7,317.6 244.1,324.8 240.1,331.3"/><polygon points="186.3,397.7 183.9,395.1 218.7,408.1 220.2,410.3"/><polygon points="321.8,336.0 317.4,329.6 337.9,320.6 344.3,326.0"/><polygon points="290.7,327.9 288.7,321.0 308.0,317.1 312.9,323.3"/><polygon points="299.8,418.1 300.9,417.1 338.4,409.4 335.8,410.7"/><polygon points="262.0,419.3 261.3,418.9 299.8,418.1 298.6,418.5"/><polygon points="343.7,402.6 344.6,399.5 378.3,384.5 377.0,387.9"/><polygon points="244.1,324.8 248.2,318.4 268.1,321.5 266.9,328.4"/><polygon points="325.8,342.3 321.8,336.0 344.3,326.0 350.3,331.4"/><polygon points="212.4,328.9 218.3,323.2 240.1,331.3 236.4,337.9"/><polygon points="224.3,413.2 222.1,412.0 260.6,418.0 261.3,418.9"/><polygon points="183.9,395.1 182.0,392.2 217.5,405.4 218.7,408.1"/><polygon points="266.9,328.4 268.1,321.5 288.7,321.0 290.7,327.9"/><polygon points="344.6,399.5 345.0,395.8 379.0,380.8 378.3,384.5"/><polygon points="329.5,348.5 325.8,342.3 350.3,331.4 355.8,336.9"/><polygon points="292.5,334.7 290.7,327.9 312.9,323.3 317.4,329.6"/><polygon points="300.9,417.1 301.7,415.6 340.6,407.7 338.4,409.4"/><polygon points="206.8,334.6 212.4,328.9 236.4,337.9 232.9,344.3"/><polygon points="261.3,418.9 260.6,418.0 300.9,417.1 299.8,418.1"/><polygon points="182.0,392.2 180.8,388.9 216.8,402.3 217.5,405.4"/><polygon points="345.0,395.8 345.0,391.8 379.0,376.7 379.0,380.8"/><polygon points="240.1,331.3 244.1,324.8 266.9,328.4 265.8,335.3"/><polygon points="332.8,354.7 329.5,348.5 355.8,336.9 360.8,342.3"/><polygon points="222.1,412.0 220.2,410.3 260.1,416.5 260.6,418.0"/><polygon points="345.0,391.8 344.6,387.4 378.3,372.4 379.0,376.7"/><polygon points="201.7,340.3 206.8,334.6 232.9,344.3 229.8,350.8"/><polygon points="265.8,335.3 266.9,328.4 290.7,327.9 292.5,334.7"/><polygon points="335.8,360.7 332.8,354.7 360.8,342.3 365.3,347.7"/><polygon points="180.8,388.9 180.2,385.2 216.4,398.7 216.8,402.3"/><polygon points="344.6,387.4 343.7,382.6 377.0,367.9 378.3,372.4"/><polygon points="294.2,341.6 292.5,334.7 317.4,329.6 321.8,336.0"/><polygon points="301.7,415.6 302.4,413.5 342.3,405.4 340.6,407.7"/><polygon points="338.4,366.6 335.8,360.7 365.3,347.7 369.1,352.9"/><polygon points="343.7,382.6 342.3,377.6 375.0,363.1 377.0,367.9"/><polygon points="340.6,372.2 338.4,366.6 369.1,352.9 372.4,358.1"/><polygon points="342.3,377.6 340.6,372.2 372.4,358.1 375.0,363.1"/><polygon points="197.1,345.9 201.7,340.3 229.8,350.8 226.9,357.1"/><polygon points="236.4,337.9 240.1,331.3 265.8,335.3 264.7,342.3"/><polygon points="180.2,385.2 180.2,381.1 216.4,394.7 216.4,398.7"/><polygon points="260.6,418.0 260.1,416.5 301.7,415.6 300.9,417.1"/><polygon points="220.2,410.3 218.7,408.1 259.7,414.5 260.1,416.5"/><polygon points="192.9,351.5 197.1,345.9 226.9,357.1 224.3,363.2"/><polygon points="180.2,381.1 180.8,376.8 216.8,390.2 216.4,394.7"/><polygon points="295.8,348.4 294.2,341.6 321.8,336.0 325.8,342.3"/><polygon points="264.7,342.3 265.8,335.3 292.5,334.7 294.2,341.6"/><polygon points="302.4,413.5 303.0,411.0 343.7,402.6 342.3,405.4"/><polygon points="189.3,356.9 192.9,351.5 224.3,363.2 222.1,369.1"/><polygon points="180.8,376.8 182.0,372.2 217.5,385.4 216.8,390.2"/><polygon points="186.3,362.2 189.3,356.9 222.1,369.1 220.2,374.9"/><polygon points="182.0,372.2 183.9,367.3 218.7,380.3 217.5,385.4"/><polygon points="183.9,367.3 186.3,362.2 220.2,374.9 218.7,380.3"/><polygon points="232.9,344.3 236.4,337.9 264.7,342.3 263.7,349.1"/><polygon points="260.1,416.5 259.7,414.5 302.4,413.5 301.7,415.6"/><polygon points="218.7,408.1 217.5,405.4 259.4,411.9 259.7,414.5"/><polygon points="297.3,355.1 295.8,348.4 325.8,342.3 329.5,348.5"/><polygon points="303.0,411.0 303.3,407.9 344.6,399.5 343.7,402.6"/><polygon points="263.7,349.1 264.7,342.3 294.2,341.6 295.8,348.4"/><polygon points="229.8,350.8 232.9,344.3 263.7,349.1 262.8,355.9"/><polygon points="217.5,405.4 216.8,402.3 259.1,408.9 259.4,411.9"/><polygon points="298.6,361.7 297.3,355.1 329.5,348.5 332.8,354.7"/><polygon points="259.7,414.5 259.4,411.9 303.0,411.0 302.4,413.5"/><polygon points="303.3,407.9 303.5,404.3 345.0,395.8 344.6,399.5"/><polygon points="262.8,355.9 263.7,349.1 295.8,348.4 297.3,355.1"/><polygon points="226.9,357.1 229.8,350.8 262.8,355.9 262.0,362.5"/><polygon points="299.8,368.1 298.6,361.7 332.8,354.7 335.8,360.7"/><polygon points="303.5,404.3 303.5,400.3 345.0,391.8 345.0,395.8"/><polygon points="216.8,402.3 216.4,398.7 259.0,405.3 259.1,408.9"/><polygon points="259.4,411.9 259.1,408.9 303.3,407.9 303.0,411.0"/><polygon points="300.9,374.2 299.8,368.1 335.8,360.7 338.4,366.6"/><polygon points="303.5,400.3 303.3,395.8 344.6,387.4 345.0,391.8"/><polygon points="224.3,363.2 226.9,357.1 262.0,362.5 261.3,368.9"/><polygon points="216.4,398.7 216.4,394.7 259.0,401.3 259.0,405.3"/><polygon points="262.0,362.5 262.8,355.9 297.3,355.1 298.6,361.7"/><polygon points="301.7,380.1 300.9,374.2 338.4,366.6 340.6,372.2"/><polygon points="303.3,395.8 303.0,391.0 343.7,382.6 344.6,387.4"/><polygon points="302.4,385.7 301.7,380.1 340.6,372.2 342.3,377.6"/><polygon points="303.0,391.0 302.4,385.7 342.3,377.6 343.7,382.6"/><polygon points="222.1,369.1 224.3,363.2 261.3,368.9 260.6,375.1"/><polygon points="259.1,408.9 259.0,405.3 303.5,404.3 303.3,407.9"/><polygon points="216.4,394.7 216.8,390.2 259.1,396.8 259.0,401.3"/><polygon points="220.2,374.9 222.1,369.1 260.6,375.1 260.1,381.1"/><polygon points="261.3,368.9 262.0,362.5 298.6,361.7 299.8,368.1"/><polygon points="216.8,390.2 217.5,385.4 259.4,391.9 259.1,396.8"/><polygon points="218.7,380.3 220.2,374.9 260.1,381.1 259.7,386.7"/><polygon points="217.5,385.4 218.7,380.3 259.7,386.7 259.4,391.9"/><polygon points="259.0,405.3 259.0,401.3 303.5,400.3 303.5,404.3"/><polygon points="260.6,375.1 261.3,368.9 299.8,368.1 300.9,374.2"/><polygon points="259.0,401.3 259.1,396.8 303.3,395.8 303.5,400.3"/><polygon points="260.1,381.1 260.6,375.1 300.9,374.2 301.7,380.1"/><polygon points="259.1,396.8 259.4,391.9 303.0,391.0 303.3,395.8"/><polygon points="259.7,386.7 260.1,381.1 301.7,380.1 302.4,385.7"/><polygon points="259.4,391.9 259.7,386.7 302.4,385.7 303.0,391.0"/></g><g stroke="#111" stroke-width="1" fill="none"><line x1="84.50" y1="283.30" x2="323.50" y2="158.00"/><line x1="323.50" y1="158.00" x2="515.50" y2="258.40"/><line x1="84.50" y1="283.30" x2="84.50" y2="383.20"/><line x1="515.50" y1="258.40" x2="515.50" y2="358.00"/><line x1="84.50" y1="383.20" x2="275.50" y2="482.90"/><line x1="275.50" y1="482.90" x2="515.50" y2="358.00"/><line x1="275.70" y1="382.60" x2="84.50" y2="283.30"/><line x1="275.70" y1="382.60" x2="515.50" y2="258.40"/><line x1="275.70" y1="382.60" x2="275.50" y2="482.90"/><line x1="84.50" y1="383.20" x2="79.62" y2="385.74"/><line x1="94.05" y1="388.19" x2="91.39" y2="389.57"/><line x1="103.60" y1="393.17" x2="98.72" y2="395.71"/><line x1="113.15" y1="398.15" x2="110.49" y2="399.54"/><line x1="122.70" y1="403.14" x2="117.82" y2="405.68"/><line x1="132.25" y1="408.12" x2="129.59" y2="409.51"/><line x1="141.80" y1="413.11" x2="136.92" y2="415.65"/><line x1="151.35" y1="418.09" x2="148.69" y2="419.48"/><line x1="160.90" y1="423.08" x2="156.02" y2="425.62"/><line x1="170.45" y1="428.06" x2="167.79" y2="429.45"/><line x1="180.00" y1="433.05" x2="175.12" y2="435.59"/><line x1="189.55" y1="438.03" x2="186.89" y2="439.42"/><line x1="199.10" y1="443.02" x2="194.22" y2="445.56"/><line x1="208.65" y1="448.00" x2="205.99" y2="449.39"/><line x1="218.20" y1="452.99" x2="213.32" y2="455.53"/><line x1="227.75" y1="457.97" x2="225.09" y2="459.36"/><line x1="237.30" y1="462.96" x2="232.42" y2="465.50"/><line x1="246.85" y1="467.94" x2="244.19" y2="469.33"/><line x1="256.40" y1="472.93" x2="251.52" y2="475.47"/><line x1="265.95" y1="477.91" x2="263.29" y2="479.30"/><line x1="275.50" y1="482.90" x2="270.62" y2="485.44"/><line x1="275.50" y1="482.90" x2="280.38" y2="485.45"/><line x1="287.50" y1="476.65" x2="290.16" y2="478.04"/><line x1="299.50" y1="470.41" x2="302.16" y2="471.80"/><line x1="311.50" y1="464.16" x2="314.16" y2="465.55"/><line x1="323.50" y1="457.92" x2="328.38" y2="460.47"/><line x1="335.50" y1="451.67" x2="338.16" y2="453.06"/><line x1="347.50" y1="445.43" x2="350.16" y2="446.82"/><line x1="359.50" y1="439.19" x2="362.16" y2="440.57"/><line x1="371.50" y1="432.94" x2="376.38" y2="435.49"/><line x1="383.50" y1="426.69" x2="386.16" y2="428.08"/><line x1="395.50" y1="420.45" x2="398.16" y2="421.84"/><line x1="407.50" y1="414.20" x2="410.16" y2="415.59"/><line x1="419.50" y1="407.96" x2="424.38" y2="410.51"/><line x1="431.50" y1="401.71" x2="434.16" y2="403.10"/><line x1="443.50" y1="395.47" x2="446.16" y2="396.86"/><line x1="455.50" y1="389.23" x2="458.16" y2="390.61"/><line x1="467.50" y1="382.98" x2="472.38" y2="385.53"/><line x1="479.50" y1="376.74" x2="482.16" y2="378.12"/><line x1="491.50" y1="370.49" x2="494.16" y2="371.88"/><line x1="503.50" y1="364.25" x2="506.16" y2="365.63"/><line x1="515.50" y1="358.00" x2="520.38" y2="360.55"/><line x1="84.50" y1="383.20" x2="79.62" y2="380.65"/><line x1="84.50" y1="378.20" x2="81.84" y2="376.82"/><line x1="84.50" y1="373.21" x2="79.62" y2="370.66"/><line x1="84.50" y1="368.21" x2="81.84" y2="366.83"/><line x1="84.50" y1="363.22" x2="79.62" y2="360.67"/><line x1="84.50" y1="358.23" x2="81.84" y2="356.84"/><line x1="84.50" y1="353.23" x2="79.62" y2="350.68"/><line x1="84.50" y1="348.24" x2="81.84" y2="346.85"/><line x1="84.50" y1="343.24" x2="79.62" y2="340.69"/><line x1="84.50" y1="338.25" x2="81.84" y2="336.86"/><line x1="84.50" y1="333.25" x2="79.62" y2="330.70"/><line x1="84.50" y1="328.25" x2="81.84" y2="326.87"/><line x1="84.50" y1="323.26" x2="79.62" y2="320.71"/><line x1="84.50" y1="318.26" x2="81.84" y2="316.88"/><line x1="84.50" y1="313.27" x2="79.62" y2="310.72"/><line x1="84.50" y1="308.27" x2="81.84" y2="306.89"/><line x1="84.50" y1="303.28" x2="79.62" y2="300.73"/><line x1="84.50" y1="298.29" x2="81.84" y2="296.90"/><line x1="84.50" y1="293.29" x2="79.62" y2="290.74"/><line x1="84.50" y1="288.30" x2="81.84" y2="286.91"/><line x1="84.50" y1="283.30" x2="79.62" y2="280.75"/></g><g font-family="Liberation Sans, sans-serif" font-size="9.6" fill="#151515" stroke="#151515" stroke-width="0.25"><text transform="translate(77.0 392.2) scale(1.05 1)" text-anchor="end">-1.0</text><text transform="translate(96.1 402.2) scale(1.05 1)" text-anchor="end">-0.8</text><text transform="translate(115.2 412.1) scale(1.05 1)" text-anchor="end">-0.6</text><text transform="translate(134.3 422.1) scale(1.05 1)" text-anchor="end">-0.4</text><text transform="translate(153.4 432.1) scale(1.05 1)" text-anchor="end">-0.2</text><text transform="translate(172.5 442.0) scale(1.05 1)" text-anchor="end">0.0</text><text transform="translate(191.6 452.0) scale(1.05 1)" text-anchor="end">0.2</text><text transform="translate(210.7 462.0) scale(1.05 1)" text-anchor="end">0.4</text><text transform="translate(229.8 472.0) scale(1.05 1)" text-anchor="end">0.6</text><text transform="translate(248.9 481.9) scale(1.05 1)" text-anchor="end">0.8</text><text transform="translate(268.0 491.9) scale(1.05 1)" text-anchor="end">1.0</text><text transform="translate(282.5 491.9) scale(1.05 1)" text-anchor="start">1.0</text><text transform="translate(330.5 466.9) scale(1.05 1)" text-anchor="start">0.5</text><text transform="translate(378.5 441.9) scale(1.05 1)" text-anchor="start">0.0</text><text transform="translate(426.5 417.0) scale(1.05 1)" text-anchor="start">-0.5</text><text transform="translate(474.5 392.0) scale(1.05 1)" text-anchor="start">-1.0</text><text transform="translate(522.5 367.0) scale(1.05 1)" text-anchor="start">-1.5</text><text transform="translate(76.5 384.7) scale(1.05 1)" text-anchor="end">-1.0</text><text transform="translate(76.5 374.7) scale(1.05 1)" text-anchor="end">-0.8</text><text transform="translate(76.5 364.7) scale(1.05 1)" text-anchor="end">-0.6</text><text transform="translate(76.5 354.7) scale(1.05 1)" text-anchor="end">-0.4</text><text transform="translate(76.5 344.7) scale(1.05 1)" text-anchor="end">-0.2</text><text transform="translate(76.5 334.8) scale(1.05 1)" text-anchor="end">0.0</text><text transform="translate(76.5 324.8) scale(1.05 1)" text-anchor="end">0.2</text><text transform="translate(76.5 314.8) scale(1.05 1)" text-anchor="end">0.4</text><text transform="translate(76.5 304.8) scale(1.05 1)" text-anchor="end">0.6</text><text transform="translate(76.5 294.8) scale(1.05 1)" text-anchor="end">0.8</text><text transform="translate(76.5 284.8) scale(1.05 1)" text-anchor="end">1.0</text><text x="300" y="151" text-anchor="middle" letter-spacing="0.6">fac3d</text></g>
</svg>
</body></html>
